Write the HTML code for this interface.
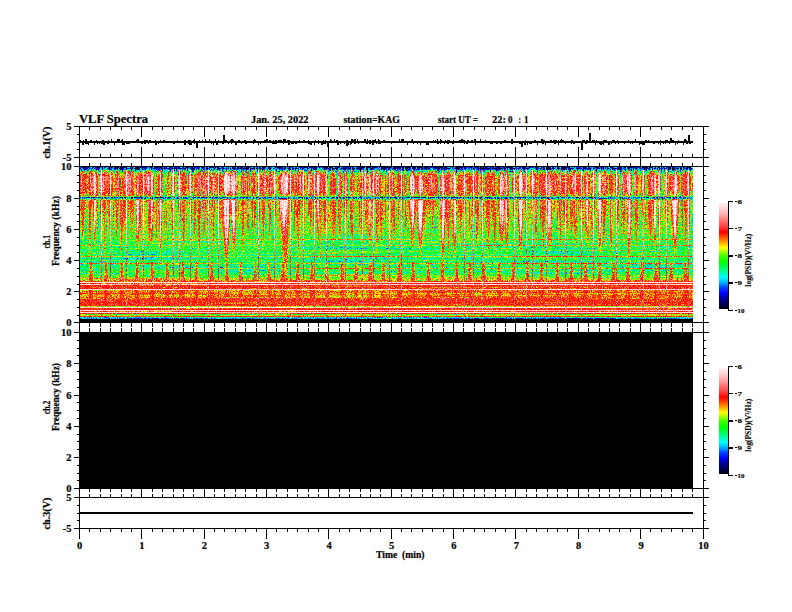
<!DOCTYPE html><html><head><meta charset="utf-8"><style>html,body{margin:0;padding:0;background:#fff;width:792px;height:612px;overflow:hidden;position:relative}</style></head><body><svg width="792" height="612" viewBox="0 0 792 612" style="position:absolute;left:0;top:0">
<defs>
<linearGradient id="bp" x1="0" y1="167" x2="0" y2="322" gradientUnits="userSpaceOnUse">
<stop offset="0.0000" stop-color="rgb(20,20,20)"/>
<stop offset="0.0129" stop-color="rgb(36,36,36)"/>
<stop offset="0.0258" stop-color="rgb(66,66,66)"/>
<stop offset="0.0452" stop-color="rgb(97,97,97)"/>
<stop offset="0.0645" stop-color="rgb(112,112,112)"/>
<stop offset="0.1613" stop-color="rgb(112,112,112)"/>
<stop offset="0.1871" stop-color="rgb(107,107,107)"/>
<stop offset="0.1935" stop-color="rgb(76,76,76)"/>
<stop offset="0.1968" stop-color="rgb(31,31,31)"/>
<stop offset="0.2032" stop-color="rgb(31,31,31)"/>
<stop offset="0.2097" stop-color="rgb(82,82,82)"/>
<stop offset="0.2194" stop-color="rgb(122,122,122)"/>
<stop offset="0.3097" stop-color="rgb(120,120,120)"/>
<stop offset="0.4065" stop-color="rgb(107,107,107)"/>
<stop offset="0.5032" stop-color="rgb(92,92,92)"/>
<stop offset="0.5742" stop-color="rgb(89,89,89)"/>
<stop offset="0.6774" stop-color="rgb(87,87,87)"/>
<stop offset="0.7032" stop-color="rgb(107,107,107)"/>
<stop offset="0.7290" stop-color="rgb(128,128,128)"/>
<stop offset="0.7355" stop-color="rgb(158,158,158)"/>
<stop offset="0.7935" stop-color="rgb(153,153,153)"/>
<stop offset="0.8000" stop-color="rgb(143,143,143)"/>
<stop offset="0.8452" stop-color="rgb(143,143,143)"/>
<stop offset="0.8516" stop-color="rgb(166,166,166)"/>
<stop offset="0.8903" stop-color="rgb(166,166,166)"/>
<stop offset="0.8968" stop-color="rgb(128,128,128)"/>
<stop offset="0.9484" stop-color="rgb(128,128,128)"/>
<stop offset="0.9677" stop-color="rgb(71,71,71)"/>
<stop offset="0.9806" stop-color="rgb(38,38,38)"/>
<stop offset="1.0000" stop-color="rgb(38,38,38)"/>
</linearGradient>
<linearGradient id="gW" x1="0" y1="0" x2="0" y2="1"><stop offset="0" stop-color="#fff" stop-opacity="0.6"/><stop offset="0.08" stop-color="#fff" stop-opacity="0.95"/><stop offset="0.6" stop-color="#fff" stop-opacity="0.9"/><stop offset="1" stop-color="#fff" stop-opacity="0.3"/></linearGradient>
<linearGradient id="gT" x1="0" y1="0" x2="0" y2="1"><stop offset="0" stop-color="#fff" stop-opacity="1"/><stop offset="0.45" stop-color="#fff" stop-opacity="0.9"/><stop offset="0.75" stop-color="#fff" stop-opacity="0.35"/><stop offset="1" stop-color="#fff" stop-opacity="0.25"/></linearGradient>
<linearGradient id="gR2" x1="0" y1="0" x2="0" y2="1"><stop offset="0" stop-color="#fff" stop-opacity="0.3"/><stop offset="0.7" stop-color="#fff" stop-opacity="0.25"/><stop offset="1" stop-color="#fff" stop-opacity="0.05"/></linearGradient>
<linearGradient id="gR" x1="0" y1="0" x2="0" y2="1"><stop offset="0" stop-color="#fff" stop-opacity="0.45"/><stop offset="0.7" stop-color="#fff" stop-opacity="0.35"/><stop offset="1" stop-color="#fff" stop-opacity="0.1"/></linearGradient>
<filter id="cmA" filterUnits="userSpaceOnUse" x="79" y="167" width="614" height="155" color-interpolation-filters="sRGB">
<feTurbulence type="fractalNoise" baseFrequency="0.8 0.7" numOctaves="1" seed="5" result="n"/>
<feColorMatrix in="n" type="matrix" values="1 0 0 0 0 1 0 0 0 0 1 0 0 0 0 0 0 0 0 1" result="g"/>
<feTurbulence type="fractalNoise" baseFrequency="0.6 0.02" numOctaves="1" seed="9" result="n2"/>
<feColorMatrix in="n2" type="matrix" values="1 0 0 0 0 1 0 0 0 0 1 0 0 0 0 0 0 0 0 1" result="g2"/>
<feComposite in="SourceGraphic" in2="g" operator="arithmetic" k1="0" k2="1" k3="0.65" k4="-0.325" result="v1"/>
<feComposite in="v1" in2="g2" operator="arithmetic" k1="0" k2="1" k3="0.6" k4="-0.3" result="v"/>
<feComponentTransfer in="v"><feFuncR type="table" tableValues="0.000 0.000 0.000 0.000 0.000 0.000 0.000 0.000 0.000 0.000 0.000 0.000 0.000 0.000 0.000 0.000 0.000 0.235 0.471 0.686 0.902 0.984 1.000 1.000 1.000 1.000 1.000 1.000 1.000 1.000 1.000 1.000 1.000 1.000 1.000 1.000 1.000 1.000 1.000 1.000 1.000"/><feFuncG type="table" tableValues="0.000 0.000 0.000 0.000 0.000 0.078 0.157 0.373 0.588 0.765 0.941 0.962 0.983 1.000 1.000 1.000 1.000 1.000 1.000 1.000 1.000 0.820 0.627 0.431 0.280 0.140 0.000 0.070 0.140 0.216 0.314 0.412 0.510 0.578 0.647 0.716 0.784 0.828 0.873 0.917 0.961"/><feFuncB type="table" tableValues="0.094 0.224 0.353 0.529 0.706 0.853 1.000 1.000 1.000 1.000 1.000 0.839 0.678 0.515 0.343 0.172 0.000 0.000 0.000 0.000 0.000 0.000 0.000 0.000 0.000 0.000 0.000 0.070 0.140 0.216 0.314 0.412 0.510 0.578 0.647 0.716 0.784 0.828 0.873 0.917 0.961"/></feComponentTransfer>
</filter>
<filter id="cmB" filterUnits="userSpaceOnUse" x="79" y="167" width="614" height="155" color-interpolation-filters="sRGB">
<feTurbulence type="fractalNoise" baseFrequency="0.8 0.7" numOctaves="1" seed="5" result="n"/>
<feColorMatrix in="n" type="matrix" values="1 0 0 0 0 1 0 0 0 0 1 0 0 0 0 0 0 0 0 1" result="g"/>
<feTurbulence type="fractalNoise" baseFrequency="0.01 0.6" numOctaves="1" seed="13" result="n2"/>
<feColorMatrix in="n2" type="matrix" values="1 0 0 0 0 1 0 0 0 0 1 0 0 0 0 0 0 0 0 1" result="g2"/>
<feComposite in="SourceGraphic" in2="g" operator="arithmetic" k1="0" k2="1" k3="0.6" k4="-0.3" result="v1"/>
<feComposite in="v1" in2="g2" operator="arithmetic" k1="0" k2="1" k3="0.4" k4="-0.2" result="v"/>
<feComponentTransfer in="v"><feFuncR type="table" tableValues="0.000 0.000 0.000 0.000 0.000 0.000 0.000 0.000 0.000 0.000 0.000 0.000 0.000 0.000 0.000 0.000 0.000 0.235 0.471 0.686 0.902 0.984 1.000 1.000 1.000 1.000 1.000 1.000 1.000 1.000 1.000 1.000 1.000 1.000 1.000 1.000 1.000 1.000 1.000 1.000 1.000"/><feFuncG type="table" tableValues="0.000 0.000 0.000 0.000 0.000 0.078 0.157 0.373 0.588 0.765 0.941 0.962 0.983 1.000 1.000 1.000 1.000 1.000 1.000 1.000 1.000 0.820 0.627 0.431 0.280 0.140 0.000 0.070 0.140 0.216 0.314 0.412 0.510 0.578 0.647 0.716 0.784 0.828 0.873 0.917 0.961"/><feFuncB type="table" tableValues="0.094 0.224 0.353 0.529 0.706 0.853 1.000 1.000 1.000 1.000 1.000 0.839 0.678 0.515 0.343 0.172 0.000 0.000 0.000 0.000 0.000 0.000 0.000 0.000 0.000 0.000 0.000 0.070 0.140 0.216 0.314 0.412 0.510 0.578 0.647 0.716 0.784 0.828 0.873 0.917 0.961"/></feComponentTransfer>
</filter>
<filter id="cmC" filterUnits="userSpaceOnUse" x="79" y="167" width="614" height="155" color-interpolation-filters="sRGB">
<feTurbulence type="fractalNoise" baseFrequency="0.8 0.7" numOctaves="1" seed="21" result="n"/>
<feColorMatrix in="n" type="matrix" values="1 0 0 0 0 1 0 0 0 0 1 0 0 0 0 0 0 0 0 1" result="g"/>
<feTurbulence type="fractalNoise" baseFrequency="0.01 0.6" numOctaves="1" seed="17" result="n2"/>
<feColorMatrix in="n2" type="matrix" values="1 0 0 0 0 1 0 0 0 0 1 0 0 0 0 0 0 0 0 1" result="g2"/>
<feComposite in="SourceGraphic" in2="g" operator="arithmetic" k1="0" k2="1" k3="0.5" k4="-0.25" result="v1"/>
<feComposite in="v1" in2="g2" operator="arithmetic" k1="0" k2="1" k3="0.3" k4="-0.15" result="v"/>
<feComponentTransfer in="v"><feFuncR type="table" tableValues="0.000 0.000 0.000 0.000 0.000 0.000 0.000 0.000 0.000 0.000 0.000 0.000 0.000 0.000 0.000 0.000 0.000 0.235 0.471 0.686 0.902 0.984 1.000 1.000 1.000 1.000 1.000 1.000 1.000 1.000 1.000 1.000 1.000 1.000 1.000 1.000 1.000 1.000 1.000 1.000 1.000"/><feFuncG type="table" tableValues="0.000 0.000 0.000 0.000 0.000 0.078 0.157 0.373 0.588 0.765 0.941 0.962 0.983 1.000 1.000 1.000 1.000 1.000 1.000 1.000 1.000 0.820 0.627 0.431 0.280 0.140 0.000 0.070 0.140 0.216 0.314 0.412 0.510 0.578 0.647 0.716 0.784 0.828 0.873 0.917 0.961"/><feFuncB type="table" tableValues="0.094 0.224 0.353 0.529 0.706 0.853 1.000 1.000 1.000 1.000 1.000 0.839 0.678 0.515 0.343 0.172 0.000 0.000 0.000 0.000 0.000 0.000 0.000 0.000 0.000 0.000 0.000 0.070 0.140 0.216 0.314 0.412 0.510 0.578 0.647 0.716 0.784 0.828 0.873 0.917 0.961"/></feComponentTransfer>
</filter>
<linearGradient id="mg" x1="0" y1="167" x2="0" y2="322" gradientUnits="userSpaceOnUse"><stop offset="0.35" stop-color="#000"/><stop offset="0.5" stop-color="#fff"/></linearGradient>
<mask id="mm" maskUnits="userSpaceOnUse" x="79" y="167" width="614" height="155"><rect x="79" y="167" width="614" height="155" fill="url(#mg)"/></mask>
<clipPath id="cC"><rect x="79" y="281" width="614" height="41"/></clipPath>
<g id="sp">
<rect x="79" y="167" width="614" height="155" fill="url(#bp)"/>
<rect x="79" y="281" width="614" height="1" fill="rgb(153,153,153)"/>
<rect x="79" y="282" width="614" height="1" fill="rgb(242,242,242)"/>
<rect x="79" y="283" width="614" height="1" fill="rgb(163,163,163)"/>
<rect x="79" y="284" width="614" height="1" fill="rgb(234,234,234)"/>
<rect x="79" y="285" width="614" height="1" fill="rgb(168,168,168)"/>
<rect x="79" y="286" width="614" height="1" fill="rgb(163,163,163)"/>
<rect x="79" y="287" width="614" height="1" fill="rgb(158,158,158)"/>
<rect x="79" y="288" width="614" height="1" fill="rgb(163,163,163)"/>
<rect x="79" y="289" width="614" height="1" fill="rgb(234,234,234)"/>
<rect x="79" y="299" width="614" height="1" fill="rgb(165,165,165)"/>
<rect x="79" y="300" width="614" height="1" fill="rgb(168,168,168)"/>
<rect x="79" y="301" width="614" height="1" fill="rgb(168,168,168)"/>
<rect x="79" y="302" width="614" height="1" fill="rgb(165,165,165)"/>
<rect x="79" y="303" width="614" height="1" fill="rgb(168,168,168)"/>
<rect x="79" y="304" width="614" height="1" fill="rgb(165,165,165)"/>
<rect x="79" y="305" width="614" height="1" fill="rgb(163,163,163)"/>
<rect x="79" y="306" width="614" height="1" fill="rgb(127,127,127)"/>
<rect x="79" y="307" width="614" height="1" fill="rgb(242,242,242)"/>
<rect x="79" y="308" width="614" height="1" fill="rgb(163,163,163)"/>
<rect x="79" y="309" width="614" height="1" fill="rgb(163,163,163)"/>
<rect x="79" y="310" width="614" height="1" fill="rgb(242,242,242)"/>
<rect x="79" y="311" width="614" height="1" fill="rgb(163,163,163)"/>
<rect x="79" y="312" width="614" height="1" fill="rgb(242,242,242)"/>
<rect x="79" y="313" width="614" height="1" fill="rgb(163,163,163)"/>
<rect x="79" y="314" width="614" height="1" fill="rgb(107,107,107)"/>
<rect x="79" y="315" width="614" height="1" fill="rgb(117,117,117)"/>
<rect x="79" y="316" width="614" height="1" fill="rgb(163,163,163)"/>
<rect x="79" y="317" width="614" height="1" fill="rgb(71,71,71)"/>
<rect x="79" y="318" width="614" height="1" fill="rgb(45,45,45)"/>
<polygon points="79.5,170.0 80.5,170.0 81.7,177.0 81.7,190.0 80.7,197.0 79.3,197.0 78.3,190.0 78.3,177.0" fill="#fff" opacity="0.36"/>
<polygon points="79.2,199 80.8,199 80.2,247 79.8,247" fill="url(#gR2)"/>
<polygon points="85.4,170.0 86.4,170.0 87.6,177.0 87.6,190.0 86.6,197.0 85.2,197.0 84.1,190.0 84.1,177.0" fill="#fff" opacity="0.37"/>
<polygon points="85.0,199 86.7,199 86.1,213 85.6,213" fill="url(#gR2)"/>
<polygon points="91.4,170.0 92.4,170.0 93.9,177.0 93.9,190.0 92.6,197.0 91.2,197.0 90.0,190.0 90.0,177.0" fill="#fff" opacity="0.41"/>
<polygon points="90.9,199 92.9,199 92.2,209 91.7,209" fill="url(#gR2)"/>
<polygon points="96.6,170.0 97.6,170.0 98.3,177.0 98.3,190.0 97.8,197.0 96.4,197.0 96.0,190.0 96.0,177.0" fill="#fff" opacity="0.41"/>
<polygon points="96.6,199 97.7,199 97.4,236 96.9,236" fill="url(#gR2)"/>
<polygon points="100.8,170.0 101.8,170.0 103.8,177.0 103.8,190.0 102.0,197.0 100.6,197.0 98.8,190.0 98.8,177.0" fill="#fff" opacity="0.44"/>
<polygon points="100.1,199 102.5,199 101.5,234 101.0,234" fill="url(#gR2)"/>
<polygon points="107.3,170.0 108.3,170.0 109.0,177.0 109.0,190.0 108.5,197.0 107.1,197.0 106.5,190.0 106.5,177.0" fill="#fff" opacity="0.25"/>
<polygon points="107.1,199 108.4,199 108.0,229 107.5,229" fill="url(#gR2)"/>
<polygon points="111.5,170.0 112.5,170.0 113.3,177.0 113.3,190.0 112.7,197.0 111.3,197.0 110.7,190.0 110.7,177.0" fill="#fff" opacity="0.30"/>
<polygon points="111.3,199 112.6,199 112.2,206 111.7,206" fill="url(#gR2)"/>
<polygon points="117.3,170.0 118.3,170.0 119.5,177.0 119.5,190.0 118.5,197.0 117.1,197.0 116.2,190.0 116.2,177.0" fill="#fff" opacity="0.42"/>
<polygon points="117.0,199 118.7,199 118.1,228 117.6,228" fill="url(#gR2)"/>
<polygon points="123.9,170.0 124.9,170.0 126.2,177.0 126.2,190.0 125.1,197.0 123.7,197.0 122.7,190.0 122.7,177.0" fill="#fff" opacity="0.38"/>
<polygon points="123.5,199 125.3,199 124.7,226 124.2,226" fill="url(#gR2)"/>
<polygon points="129.0,170.0 130.0,170.0 132.0,177.0 132.0,190.0 130.2,197.0 128.8,197.0 127.0,190.0 127.0,177.0" fill="#fff" opacity="0.45"/>
<polygon points="128.3,199 130.8,199 129.8,243 129.3,243" fill="url(#gR2)"/>
<polygon points="135.9,170.0 136.9,170.0 137.8,177.0 137.8,190.0 137.1,197.0 135.7,197.0 134.9,190.0 134.9,177.0" fill="#fff" opacity="0.30"/>
<polygon points="135.6,199 137.1,199 136.6,218 136.1,218" fill="url(#gR2)"/>
<polygon points="140.1,170.0 141.1,170.0 142.8,177.0 142.8,190.0 141.3,197.0 139.9,197.0 138.5,190.0 138.5,177.0" fill="#fff" opacity="0.33"/>
<polygon points="139.6,199 141.7,199 140.9,243 140.4,243" fill="url(#gR2)"/>
<polygon points="145.7,170.0 146.7,170.0 148.6,177.0 148.6,190.0 146.9,197.0 145.5,197.0 143.7,190.0 143.7,177.0" fill="#fff" opacity="0.42"/>
<polygon points="145.0,199 147.4,199 146.4,205 145.9,205" fill="url(#gR2)"/>
<polygon points="150.5,170.0 151.5,170.0 153.4,177.0 153.4,190.0 151.7,197.0 150.3,197.0 148.7,190.0 148.7,177.0" fill="#fff" opacity="0.34"/>
<polygon points="149.8,199 152.2,199 151.3,249 150.8,249" fill="url(#gR2)"/>
<polygon points="156.1,170.0 157.1,170.0 157.7,177.0 157.7,190.0 157.3,197.0 155.9,197.0 155.5,190.0 155.5,177.0" fill="#fff" opacity="0.38"/>
<polygon points="156.1,199 157.2,199 156.9,240 156.4,240" fill="url(#gR2)"/>
<polygon points="161.2,170.0 162.2,170.0 162.8,177.0 162.8,190.0 162.4,197.0 161.0,197.0 160.6,190.0 160.6,177.0" fill="#fff" opacity="0.32"/>
<polygon points="161.1,199 162.3,199 161.9,248 161.4,248" fill="url(#gR2)"/>
<polygon points="168.2,170.0 169.2,170.0 169.9,177.0 169.9,190.0 169.4,197.0 168.0,197.0 167.5,190.0 167.5,177.0" fill="#fff" opacity="0.30"/>
<polygon points="168.1,199 169.3,199 169.0,210 168.5,210" fill="url(#gR2)"/>
<polygon points="172.5,170.0 173.5,170.0 175.2,177.0 175.2,190.0 173.7,197.0 172.3,197.0 170.8,190.0 170.8,177.0" fill="#fff" opacity="0.29"/>
<polygon points="171.9,199 174.1,199 173.2,230 172.7,230" fill="url(#gR2)"/>
<polygon points="178.2,170.0 179.2,170.0 180.0,177.0 180.0,190.0 179.4,197.0 178.0,197.0 177.5,190.0 177.5,177.0" fill="#fff" opacity="0.40"/>
<polygon points="178.1,199 179.4,199 179.0,211 178.5,211" fill="url(#gR2)"/>
<polygon points="184.8,170.0 185.8,170.0 186.5,177.0 186.5,190.0 186.0,197.0 184.6,197.0 184.1,190.0 184.1,177.0" fill="#fff" opacity="0.33"/>
<polygon points="184.7,199 185.9,199 185.6,215 185.1,215" fill="url(#gR2)"/>
<polygon points="189.9,170.0 190.9,170.0 192.9,177.0 192.9,190.0 191.1,197.0 189.7,197.0 187.9,190.0 187.9,177.0" fill="#fff" opacity="0.41"/>
<polygon points="189.2,199 191.6,199 190.7,219 190.2,219" fill="url(#gR2)"/>
<polygon points="197.4,170.0 198.4,170.0 199.3,177.0 199.3,190.0 198.6,197.0 197.2,197.0 196.6,190.0 196.6,177.0" fill="#fff" opacity="0.33"/>
<polygon points="197.3,199 198.6,199 198.2,243 197.7,243" fill="url(#gR2)"/>
<polygon points="204.0,170.0 205.0,170.0 205.7,177.0 205.7,190.0 205.2,197.0 203.8,197.0 203.4,190.0 203.4,177.0" fill="#fff" opacity="0.45"/>
<polygon points="203.9,199 205.1,199 204.8,215 204.3,215" fill="url(#gR2)"/>
<polygon points="209.0,170.0 210.0,170.0 211.7,177.0 211.7,190.0 210.2,197.0 208.8,197.0 207.4,190.0 207.4,177.0" fill="#fff" opacity="0.32"/>
<polygon points="208.5,199 210.6,199 209.8,218 209.3,218" fill="url(#gR2)"/>
<polygon points="213.3,170.0 214.3,170.0 215.0,177.0 215.0,190.0 214.5,197.0 213.1,197.0 212.7,190.0 212.7,177.0" fill="#fff" opacity="0.37"/>
<polygon points="213.3,199 214.4,199 214.1,216 213.6,216" fill="url(#gR2)"/>
<polygon points="219.7,170.0 220.7,170.0 221.8,177.0 221.8,190.0 220.9,197.0 219.5,197.0 218.7,190.0 218.7,177.0" fill="#fff" opacity="0.34"/>
<polygon points="219.5,199 221.0,199 220.5,248 220.0,248" fill="url(#gR2)"/>
<polygon points="225.7,170.0 226.7,170.0 228.0,177.0 228.0,190.0 226.9,197.0 225.5,197.0 224.3,190.0 224.3,177.0" fill="#fff" opacity="0.42"/>
<polygon points="225.2,199 227.1,199 226.4,213 225.9,213" fill="url(#gR2)"/>
<polygon points="230.3,170.0 231.3,170.0 233.2,177.0 233.2,190.0 231.5,197.0 230.1,197.0 228.4,190.0 228.4,177.0" fill="#fff" opacity="0.41"/>
<polygon points="229.6,199 232.0,199 231.0,216 230.5,216" fill="url(#gR2)"/>
<polygon points="235.1,170.0 236.1,170.0 237.7,177.0 237.7,190.0 236.3,197.0 234.9,197.0 233.4,190.0 233.4,177.0" fill="#fff" opacity="0.44"/>
<polygon points="234.5,199 236.6,199 235.8,214 235.3,214" fill="url(#gR2)"/>
<polygon points="242.9,170.0 243.9,170.0 245.7,177.0 245.7,190.0 244.1,197.0 242.7,197.0 241.0,190.0 241.0,177.0" fill="#fff" opacity="0.37"/>
<polygon points="242.2,199 244.5,199 243.6,224 243.1,224" fill="url(#gR2)"/>
<polygon points="247.3,170.0 248.3,170.0 248.8,177.0 248.8,190.0 248.5,197.0 247.1,197.0 246.7,190.0 246.7,177.0" fill="#fff" opacity="0.44"/>
<polygon points="247.2,199 248.3,199 248.0,216 247.5,216" fill="url(#gR2)"/>
<polygon points="254.1,170.0 255.1,170.0 256.0,177.0 256.0,190.0 255.3,197.0 253.9,197.0 253.2,190.0 253.2,177.0" fill="#fff" opacity="0.41"/>
<polygon points="253.9,199 255.3,199 254.8,232 254.3,232" fill="url(#gR2)"/>
<polygon points="259.3,170.0 260.3,170.0 261.0,177.0 261.0,190.0 260.5,197.0 259.1,197.0 258.5,190.0 258.5,177.0" fill="#fff" opacity="0.39"/>
<polygon points="259.1,199 260.4,199 260.0,208 259.5,208" fill="url(#gR2)"/>
<polygon points="264.2,170.0 265.2,170.0 266.5,177.0 266.5,190.0 265.4,197.0 264.0,197.0 262.8,190.0 262.8,177.0" fill="#fff" opacity="0.42"/>
<polygon points="263.8,199 265.6,199 264.9,233 264.4,233" fill="url(#gR2)"/>
<polygon points="269.3,170.0 270.3,170.0 272.2,177.0 272.2,190.0 270.5,197.0 269.1,197.0 267.4,190.0 267.4,177.0" fill="#fff" opacity="0.29"/>
<polygon points="268.6,199 271.0,199 270.0,206 269.5,206" fill="url(#gR2)"/>
<polygon points="274.4,170.0 275.4,170.0 276.5,177.0 276.5,190.0 275.6,197.0 274.2,197.0 273.2,190.0 273.2,177.0" fill="#fff" opacity="0.26"/>
<polygon points="274.0,199 275.7,199 275.1,213 274.6,213" fill="url(#gR2)"/>
<polygon points="279.8,170.0 280.8,170.0 282.2,177.0 282.2,190.0 281.0,197.0 279.6,197.0 278.5,190.0 278.5,177.0" fill="#fff" opacity="0.28"/>
<polygon points="279.4,199 281.3,199 280.6,221 280.1,221" fill="url(#gR2)"/>
<polygon points="287.4,170.0 288.4,170.0 290.4,177.0 290.4,190.0 288.6,197.0 287.2,197.0 285.4,190.0 285.4,177.0" fill="#fff" opacity="0.38"/>
<polygon points="286.7,199 289.1,199 288.2,236 287.7,236" fill="url(#gR2)"/>
<polygon points="293.7,170.0 294.7,170.0 295.5,177.0 295.5,190.0 294.9,197.0 293.5,197.0 293.0,190.0 293.0,177.0" fill="#fff" opacity="0.26"/>
<polygon points="293.6,199 294.9,199 294.5,206 294.0,206" fill="url(#gR2)"/>
<polygon points="301.4,170.0 302.4,170.0 303.9,177.0 303.9,190.0 302.6,197.0 301.2,197.0 299.8,190.0 299.8,177.0" fill="#fff" opacity="0.44"/>
<polygon points="300.9,199 302.9,199 302.1,206 301.6,206" fill="url(#gR2)"/>
<polygon points="307.9,170.0 308.9,170.0 310.2,177.0 310.2,190.0 309.1,197.0 307.7,197.0 306.7,190.0 306.7,177.0" fill="#fff" opacity="0.40"/>
<polygon points="307.6,199 309.3,199 308.7,219 308.2,219" fill="url(#gR2)"/>
<polygon points="315.9,170.0 316.9,170.0 317.5,177.0 317.5,190.0 317.1,197.0 315.7,197.0 315.3,190.0 315.3,177.0" fill="#fff" opacity="0.36"/>
<polygon points="315.9,199 317.0,199 316.7,238 316.2,238" fill="url(#gR2)"/>
<polygon points="323.5,170.0 324.5,170.0 326.1,177.0 326.1,190.0 324.7,197.0 323.3,197.0 321.9,190.0 321.9,177.0" fill="#fff" opacity="0.39"/>
<polygon points="323.0,199 325.1,199 324.3,241 323.8,241" fill="url(#gR2)"/>
<polygon points="331.2,170.0 332.2,170.0 333.2,177.0 333.2,190.0 332.4,197.0 331.0,197.0 330.2,190.0 330.2,177.0" fill="#fff" opacity="0.39"/>
<polygon points="330.9,199 332.5,199 331.9,246 331.4,246" fill="url(#gR2)"/>
<polygon points="338.7,170.0 339.7,170.0 340.8,177.0 340.8,190.0 339.9,197.0 338.5,197.0 337.6,190.0 337.6,177.0" fill="#fff" opacity="0.41"/>
<polygon points="338.4,199 340.0,199 339.4,244 338.9,244" fill="url(#gR2)"/>
<polygon points="345.0,170.0 346.0,170.0 347.4,177.0 347.4,190.0 346.2,197.0 344.8,197.0 343.5,190.0 343.5,177.0" fill="#fff" opacity="0.33"/>
<polygon points="344.5,199 346.4,199 345.7,231 345.2,231" fill="url(#gR2)"/>
<polygon points="351.4,170.0 352.4,170.0 353.0,177.0 353.0,190.0 352.6,197.0 351.2,197.0 350.8,190.0 350.8,177.0" fill="#fff" opacity="0.38"/>
<polygon points="351.3,199 352.5,199 352.2,250 351.7,250" fill="url(#gR2)"/>
<polygon points="358.9,170.0 359.9,170.0 361.5,177.0 361.5,190.0 360.1,197.0 358.7,197.0 357.3,190.0 357.3,177.0" fill="#fff" opacity="0.33"/>
<polygon points="358.4,199 360.5,199 359.7,238 359.2,238" fill="url(#gR2)"/>
<polygon points="365.2,170.0 366.2,170.0 367.4,177.0 367.4,190.0 366.4,197.0 365.0,197.0 364.1,190.0 364.1,177.0" fill="#fff" opacity="0.42"/>
<polygon points="364.9,199 366.6,199 366.0,209 365.5,209" fill="url(#gR2)"/>
<polygon points="372.2,170.0 373.2,170.0 373.8,177.0 373.8,190.0 373.4,197.0 372.0,197.0 371.7,190.0 371.7,177.0" fill="#fff" opacity="0.37"/>
<polygon points="372.2,199 373.3,199 373.0,227 372.5,227" fill="url(#gR2)"/>
<polygon points="377.2,170.0 378.2,170.0 379.7,177.0 379.7,190.0 378.4,197.0 377.0,197.0 375.6,190.0 375.6,177.0" fill="#fff" opacity="0.35"/>
<polygon points="376.6,199 378.7,199 377.9,233 377.4,233" fill="url(#gR2)"/>
<polygon points="384.8,170.0 385.8,170.0 386.7,177.0 386.7,190.0 386.0,197.0 384.6,197.0 384.0,190.0 384.0,177.0" fill="#fff" opacity="0.25"/>
<polygon points="384.7,199 386.0,199 385.6,219 385.1,219" fill="url(#gR2)"/>
<polygon points="391.6,170.0 392.6,170.0 393.4,177.0 393.4,190.0 392.8,197.0 391.4,197.0 390.8,190.0 390.8,177.0" fill="#fff" opacity="0.28"/>
<polygon points="391.4,199 392.7,199 392.3,246 391.8,246" fill="url(#gR2)"/>
<polygon points="398.2,170.0 399.2,170.0 400.4,177.0 400.4,190.0 399.4,197.0 398.0,197.0 397.0,190.0 397.0,177.0" fill="#fff" opacity="0.43"/>
<polygon points="397.9,199 399.5,199 399.0,220 398.5,220" fill="url(#gR2)"/>
<polygon points="404.9,170.0 405.9,170.0 406.7,177.0 406.7,190.0 406.1,197.0 404.7,197.0 404.1,190.0 404.1,177.0" fill="#fff" opacity="0.34"/>
<polygon points="404.7,199 406.0,199 405.6,241 405.1,241" fill="url(#gR2)"/>
<polygon points="412.5,170.0 413.5,170.0 415.3,177.0 415.3,190.0 413.7,197.0 412.3,197.0 410.7,190.0 410.7,177.0" fill="#fff" opacity="0.33"/>
<polygon points="411.9,199 414.2,199 413.3,231 412.8,231" fill="url(#gR2)"/>
<polygon points="417.8,170.0 418.8,170.0 419.5,177.0 419.5,190.0 419.0,197.0 417.6,197.0 417.1,190.0 417.1,177.0" fill="#fff" opacity="0.35"/>
<polygon points="417.7,199 418.9,199 418.5,243 418.0,243" fill="url(#gR2)"/>
<polygon points="425.2,170.0 426.2,170.0 427.7,177.0 427.7,190.0 426.4,197.0 425.0,197.0 423.6,190.0 423.6,177.0" fill="#fff" opacity="0.44"/>
<polygon points="424.6,199 426.7,199 425.9,217 425.4,217" fill="url(#gR2)"/>
<polygon points="429.9,170.0 430.9,170.0 432.0,177.0 432.0,190.0 431.1,197.0 429.7,197.0 428.7,190.0 428.7,177.0" fill="#fff" opacity="0.31"/>
<polygon points="429.5,199 431.2,199 430.6,215 430.1,215" fill="url(#gR2)"/>
<polygon points="435.5,170.0 436.5,170.0 438.0,177.0 438.0,190.0 436.7,197.0 435.3,197.0 434.1,190.0 434.1,177.0" fill="#fff" opacity="0.35"/>
<polygon points="435.0,199 437.0,199 436.3,219 435.8,219" fill="url(#gR2)"/>
<polygon points="442.9,170.0 443.9,170.0 445.8,177.0 445.8,190.0 444.1,197.0 442.7,197.0 440.9,190.0 440.9,177.0" fill="#fff" opacity="0.34"/>
<polygon points="442.1,199 444.6,199 443.6,208 443.1,208" fill="url(#gR2)"/>
<polygon points="447.0,170.0 448.0,170.0 449.8,177.0 449.8,190.0 448.2,197.0 446.8,197.0 445.2,190.0 445.2,177.0" fill="#fff" opacity="0.26"/>
<polygon points="446.3,199 448.7,199 447.7,237 447.2,237" fill="url(#gR2)"/>
<polygon points="453.3,170.0 454.3,170.0 455.2,177.0 455.2,190.0 454.5,197.0 453.1,197.0 452.3,190.0 452.3,177.0" fill="#fff" opacity="0.41"/>
<polygon points="453.0,199 454.5,199 454.0,206 453.5,206" fill="url(#gR2)"/>
<polygon points="457.8,170.0 458.8,170.0 460.0,177.0 460.0,190.0 459.0,197.0 457.6,197.0 456.6,190.0 456.6,177.0" fill="#fff" opacity="0.25"/>
<polygon points="457.5,199 459.2,199 458.6,242 458.1,242" fill="url(#gR2)"/>
<polygon points="462.8,170.0 463.8,170.0 464.5,177.0 464.5,190.0 464.0,197.0 462.6,197.0 462.1,190.0 462.1,177.0" fill="#fff" opacity="0.26"/>
<polygon points="462.7,199 463.9,199 463.5,233 463.0,233" fill="url(#gR2)"/>
<polygon points="468.6,170.0 469.6,170.0 471.0,177.0 471.0,190.0 469.8,197.0 468.4,197.0 467.1,190.0 467.1,177.0" fill="#fff" opacity="0.38"/>
<polygon points="468.1,199 470.0,199 469.3,241 468.8,241" fill="url(#gR2)"/>
<polygon points="476.4,170.0 477.4,170.0 478.9,177.0 478.9,190.0 477.6,197.0 476.2,197.0 474.9,190.0 474.9,177.0" fill="#fff" opacity="0.29"/>
<polygon points="475.9,199 477.9,199 477.1,226 476.6,226" fill="url(#gR2)"/>
<polygon points="481.1,170.0 482.1,170.0 482.6,177.0 482.6,190.0 482.3,197.0 480.9,197.0 480.6,190.0 480.6,177.0" fill="#fff" opacity="0.34"/>
<polygon points="481.1,199 482.1,199 481.9,237 481.4,237" fill="url(#gR2)"/>
<polygon points="485.8,170.0 486.8,170.0 487.7,177.0 487.7,190.0 487.0,197.0 485.6,197.0 484.9,190.0 484.9,177.0" fill="#fff" opacity="0.32"/>
<polygon points="485.6,199 487.0,199 486.6,236 486.1,236" fill="url(#gR2)"/>
<polygon points="491.9,170.0 492.9,170.0 494.3,177.0 494.3,190.0 493.1,197.0 491.7,197.0 490.5,190.0 490.5,177.0" fill="#fff" opacity="0.40"/>
<polygon points="491.4,199 493.4,199 492.7,223 492.2,223" fill="url(#gR2)"/>
<polygon points="499.1,170.0 500.1,170.0 501.9,177.0 501.9,190.0 500.3,197.0 498.9,197.0 497.2,190.0 497.2,177.0" fill="#fff" opacity="0.27"/>
<polygon points="498.4,199 500.8,199 499.8,247 499.3,247" fill="url(#gR2)"/>
<polygon points="506.0,170.0 507.0,170.0 507.7,177.0 507.7,190.0 507.2,197.0 505.8,197.0 505.3,190.0 505.3,177.0" fill="#fff" opacity="0.34"/>
<polygon points="505.9,199 507.1,199 506.7,233 506.2,233" fill="url(#gR2)"/>
<polygon points="513.6,170.0 514.6,170.0 515.7,177.0 515.7,190.0 514.8,197.0 513.4,197.0 512.5,190.0 512.5,177.0" fill="#fff" opacity="0.36"/>
<polygon points="513.3,199 514.9,199 514.4,245 513.9,245" fill="url(#gR2)"/>
<polygon points="520.8,170.0 521.8,170.0 523.7,177.0 523.7,190.0 522.0,197.0 520.6,197.0 518.9,190.0 518.9,177.0" fill="#fff" opacity="0.34"/>
<polygon points="520.1,199 522.5,199 521.5,234 521.0,234" fill="url(#gR2)"/>
<polygon points="525.6,170.0 526.6,170.0 528.2,177.0 528.2,190.0 526.8,197.0 525.4,197.0 524.0,190.0 524.0,177.0" fill="#fff" opacity="0.41"/>
<polygon points="525.1,199 527.2,199 526.4,234 525.9,234" fill="url(#gR2)"/>
<polygon points="532.5,170.0 533.5,170.0 534.3,177.0 534.3,190.0 533.7,197.0 532.3,197.0 531.7,190.0 531.7,177.0" fill="#fff" opacity="0.43"/>
<polygon points="532.3,199 533.6,199 533.2,249 532.7,249" fill="url(#gR2)"/>
<polygon points="540.4,170.0 541.4,170.0 542.7,177.0 542.7,190.0 541.6,197.0 540.2,197.0 539.1,190.0 539.1,177.0" fill="#fff" opacity="0.41"/>
<polygon points="540.0,199 541.8,199 541.1,219 540.6,219" fill="url(#gR2)"/>
<polygon points="548.0,170.0 549.0,170.0 550.8,177.0 550.8,190.0 549.2,197.0 547.8,197.0 546.2,190.0 546.2,177.0" fill="#fff" opacity="0.32"/>
<polygon points="547.4,199 549.7,199 548.8,209 548.3,209" fill="url(#gR2)"/>
<polygon points="553.8,170.0 554.8,170.0 556.1,177.0 556.1,190.0 555.0,197.0 553.6,197.0 552.5,190.0 552.5,177.0" fill="#fff" opacity="0.40"/>
<polygon points="553.4,199 555.2,199 554.5,227 554.0,227" fill="url(#gR2)"/>
<polygon points="557.9,170.0 558.9,170.0 560.6,177.0 560.6,190.0 559.1,197.0 557.7,197.0 556.2,190.0 556.2,177.0" fill="#fff" opacity="0.26"/>
<polygon points="557.3,199 559.5,199 558.7,241 558.2,241" fill="url(#gR2)"/>
<polygon points="562.6,170.0 563.6,170.0 564.6,177.0 564.6,190.0 563.8,197.0 562.4,197.0 561.6,190.0 561.6,177.0" fill="#fff" opacity="0.41"/>
<polygon points="562.3,199 563.8,199 563.3,211 562.8,211" fill="url(#gR2)"/>
<polygon points="567.2,170.0 568.2,170.0 569.5,177.0 569.5,190.0 568.4,197.0 567.0,197.0 565.9,190.0 565.9,177.0" fill="#fff" opacity="0.39"/>
<polygon points="566.8,199 568.6,199 567.9,243 567.4,243" fill="url(#gR2)"/>
<polygon points="574.0,170.0 575.0,170.0 576.9,177.0 576.9,190.0 575.2,197.0 573.8,197.0 572.0,190.0 572.0,177.0" fill="#fff" opacity="0.35"/>
<polygon points="573.2,199 575.7,199 574.7,248 574.2,248" fill="url(#gR2)"/>
<polygon points="578.3,170.0 579.3,170.0 580.1,177.0 580.1,190.0 579.5,197.0 578.1,197.0 577.5,190.0 577.5,177.0" fill="#fff" opacity="0.36"/>
<polygon points="578.1,199 579.5,199 579.0,218 578.5,218" fill="url(#gR2)"/>
<polygon points="585.2,170.0 586.2,170.0 587.7,177.0 587.7,190.0 586.4,197.0 585.0,197.0 583.8,190.0 583.8,177.0" fill="#fff" opacity="0.35"/>
<polygon points="584.7,199 586.7,199 586.0,243 585.5,243" fill="url(#gR2)"/>
<polygon points="591.5,170.0 592.5,170.0 593.4,177.0 593.4,190.0 592.7,197.0 591.3,197.0 590.5,190.0 590.5,177.0" fill="#fff" opacity="0.33"/>
<polygon points="591.2,199 592.7,199 592.2,243 591.7,243" fill="url(#gR2)"/>
<polygon points="599.1,170.0 600.1,170.0 600.9,177.0 600.9,190.0 600.3,197.0 598.9,197.0 598.2,190.0 598.2,177.0" fill="#fff" opacity="0.42"/>
<polygon points="598.9,199 600.2,199 599.8,249 599.3,249" fill="url(#gR2)"/>
<polygon points="605.1,170.0 606.1,170.0 607.5,177.0 607.5,190.0 606.3,197.0 604.9,197.0 603.8,190.0 603.8,177.0" fill="#fff" opacity="0.29"/>
<polygon points="604.7,199 606.6,199 605.9,229 605.4,229" fill="url(#gR2)"/>
<polygon points="611.2,170.0 612.2,170.0 613.6,177.0 613.6,190.0 612.4,197.0 611.0,197.0 609.8,190.0 609.8,177.0" fill="#fff" opacity="0.26"/>
<polygon points="610.7,199 612.6,199 611.9,249 611.4,249" fill="url(#gR2)"/>
<polygon points="617.2,170.0 618.2,170.0 619.3,177.0 619.3,190.0 618.4,197.0 617.0,197.0 616.1,190.0 616.1,177.0" fill="#fff" opacity="0.41"/>
<polygon points="616.9,199 618.5,199 618.0,230 617.5,230" fill="url(#gR2)"/>
<polygon points="623.2,170.0 624.2,170.0 625.7,177.0 625.7,190.0 624.4,197.0 623.0,197.0 621.7,190.0 621.7,177.0" fill="#fff" opacity="0.26"/>
<polygon points="622.7,199 624.7,199 623.9,229 623.4,229" fill="url(#gR2)"/>
<polygon points="628.8,170.0 629.8,170.0 631.8,177.0 631.8,190.0 630.0,197.0 628.6,197.0 626.9,190.0 626.9,177.0" fill="#fff" opacity="0.43"/>
<polygon points="628.1,199 630.6,199 629.6,217 629.1,217" fill="url(#gR2)"/>
<polygon points="634.7,170.0 635.7,170.0 636.4,177.0 636.4,190.0 635.9,197.0 634.5,197.0 634.0,190.0 634.0,177.0" fill="#fff" opacity="0.34"/>
<polygon points="634.6,199 635.8,199 635.5,242 635.0,242" fill="url(#gR2)"/>
<polygon points="642.3,170.0 643.3,170.0 644.6,177.0 644.6,190.0 643.5,197.0 642.1,197.0 641.1,190.0 641.1,177.0" fill="#fff" opacity="0.31"/>
<polygon points="642.0,199 643.7,199 643.1,214 642.6,214" fill="url(#gR2)"/>
<polygon points="648.8,170.0 649.8,170.0 651.7,177.0 651.7,190.0 650.0,197.0 648.6,197.0 646.9,190.0 646.9,177.0" fill="#fff" opacity="0.28"/>
<polygon points="648.1,199 650.5,199 649.6,240 649.1,240" fill="url(#gR2)"/>
<polygon points="652.9,170.0 653.9,170.0 654.7,177.0 654.7,190.0 654.1,197.0 652.7,197.0 652.1,190.0 652.1,177.0" fill="#fff" opacity="0.30"/>
<polygon points="652.8,199 654.0,199 653.7,236 653.2,236" fill="url(#gR2)"/>
<polygon points="658.2,170.0 659.2,170.0 660.2,177.0 660.2,190.0 659.4,197.0 658.0,197.0 657.2,190.0 657.2,177.0" fill="#fff" opacity="0.37"/>
<polygon points="657.9,199 659.5,199 658.9,210 658.4,210" fill="url(#gR2)"/>
<polygon points="665.1,170.0 666.1,170.0 666.8,177.0 666.8,190.0 666.3,197.0 664.9,197.0 664.4,190.0 664.4,177.0" fill="#fff" opacity="0.35"/>
<polygon points="665.0,199 666.2,199 665.9,216 665.4,216" fill="url(#gR2)"/>
<polygon points="669.9,170.0 670.9,170.0 672.2,177.0 672.2,190.0 671.1,197.0 669.7,197.0 668.6,190.0 668.6,177.0" fill="#fff" opacity="0.34"/>
<polygon points="669.5,199 671.3,199 670.7,222 670.2,222" fill="url(#gR2)"/>
<polygon points="675.6,170.0 676.6,170.0 677.9,177.0 677.9,190.0 676.8,197.0 675.4,197.0 674.3,190.0 674.3,177.0" fill="#fff" opacity="0.28"/>
<polygon points="675.2,199 677.0,199 676.3,214 675.8,214" fill="url(#gR2)"/>
<polygon points="682.1,170.0 683.1,170.0 684.5,177.0 684.5,190.0 683.3,197.0 681.9,197.0 680.6,190.0 680.6,177.0" fill="#fff" opacity="0.36"/>
<polygon points="681.6,199 683.6,199 682.8,243 682.3,243" fill="url(#gR2)"/>
<polygon points="688.5,170.0 689.5,170.0 691.3,177.0 691.3,190.0 689.7,197.0 688.3,197.0 686.7,190.0 686.7,177.0" fill="#fff" opacity="0.30"/>
<polygon points="687.9,199 690.2,199 689.3,238 688.8,238" fill="url(#gR2)"/>
<polygon points="82.4,170.0 83.4,170.0 85.3,177.0 85.3,190.0 83.6,197.0 82.2,197.0 80.5,190.0 80.5,177.0" fill="#fff" opacity="0.38"/>
<polygon points="81.2,199 84.6,199 83.3,245 82.5,245" fill="url(#gR)"/>
<polygon points="89.5,170.0 90.5,170.0 91.8,177.0 91.8,190.0 90.7,197.0 89.3,197.0 88.2,190.0 88.2,177.0" fill="#fff" opacity="0.38"/>
<polygon points="88.7,199 91.3,199 90.4,265 89.6,265" fill="url(#gR)"/>
<polygon points="104.4,170.0 105.4,170.0 106.6,177.0 106.6,190.0 105.6,197.0 104.2,197.0 103.2,190.0 103.2,177.0" fill="#fff" opacity="0.38"/>
<polygon points="103.7,199 106.1,199 105.3,268 104.5,268" fill="url(#gR)"/>
<polygon points="116.1,170.0 117.1,170.0 119.0,177.0 119.0,190.0 117.3,197.0 115.9,197.0 114.2,190.0 114.2,177.0" fill="#fff" opacity="0.38"/>
<polygon points="114.9,199 118.3,199 117.0,239 116.2,239" fill="url(#gR)"/>
<polygon points="120.8,170.0 121.8,170.0 123.0,177.0 123.0,190.0 122.0,197.0 120.6,197.0 119.6,190.0 119.6,177.0" fill="#fff" opacity="0.38"/>
<polygon points="120.1,199 122.5,199 121.7,259 120.9,259" fill="url(#gR)"/>
<polygon points="131.8,170.0 132.8,170.0 134.1,177.0 134.1,190.0 133.0,197.0 131.6,197.0 130.5,190.0 130.5,177.0" fill="#fff" opacity="0.38"/>
<polygon points="131.1,199 133.5,199 132.7,238 131.9,238" fill="url(#gR)"/>
<polygon points="149.0,170.0 150.0,170.0 151.8,177.0 151.8,190.0 150.2,197.0 148.8,197.0 147.2,190.0 147.2,177.0" fill="#fff" opacity="0.38"/>
<polygon points="147.9,199 151.1,199 149.9,249 149.1,249" fill="url(#gR)"/>
<polygon points="160.0,170.0 161.0,170.0 162.8,177.0 162.8,190.0 161.2,197.0 159.8,197.0 158.2,190.0 158.2,177.0" fill="#fff" opacity="0.38"/>
<polygon points="158.9,199 162.1,199 160.9,239 160.1,239" fill="url(#gR)"/>
<polygon points="183.2,170.0 184.2,170.0 185.6,177.0 185.6,190.0 184.4,197.0 183.0,197.0 181.8,190.0 181.8,177.0" fill="#fff" opacity="0.38"/>
<polygon points="182.4,199 185.0,199 184.1,258 183.3,258" fill="url(#gR)"/>
<polygon points="194.2,170.0 195.2,170.0 196.2,177.0 196.2,190.0 195.4,197.0 194.0,197.0 193.2,190.0 193.2,177.0" fill="#fff" opacity="0.38"/>
<polygon points="193.6,199 195.8,199 195.1,242 194.3,242" fill="url(#gR)"/>
<polygon points="198.9,170.0 199.9,170.0 201.6,177.0 201.6,190.0 200.1,197.0 198.7,197.0 197.2,190.0 197.2,177.0" fill="#fff" opacity="0.38"/>
<polygon points="197.9,199 200.9,199 199.8,265 199.0,265" fill="url(#gR)"/>
<polygon points="203.5,170.0 204.5,170.0 206.5,177.0 206.5,190.0 204.7,197.0 203.3,197.0 201.5,190.0 201.5,177.0" fill="#fff" opacity="0.38"/>
<polygon points="202.3,199 205.7,199 204.4,239 203.6,239" fill="url(#gR)"/>
<polygon points="213.0,170.0 214.0,170.0 215.5,177.0 215.5,190.0 214.2,197.0 212.8,197.0 211.5,190.0 211.5,177.0" fill="#fff" opacity="0.38"/>
<polygon points="212.1,199 214.9,199 213.9,260 213.1,260" fill="url(#gR)"/>
<polygon points="242.5,170.0 243.5,170.0 245.0,177.0 245.0,190.0 243.7,197.0 242.3,197.0 241.0,190.0 241.0,177.0" fill="#fff" opacity="0.38"/>
<polygon points="241.6,199 244.4,199 243.4,258 242.6,258" fill="url(#gR)"/>
<polygon points="247.5,170.0 248.5,170.0 249.7,177.0 249.7,190.0 248.7,197.0 247.3,197.0 246.3,190.0 246.3,177.0" fill="#fff" opacity="0.38"/>
<polygon points="246.8,199 249.2,199 248.4,237 247.6,237" fill="url(#gR)"/>
<polygon points="252.2,170.0 253.2,170.0 254.3,177.0 254.3,190.0 253.4,197.0 252.0,197.0 251.1,190.0 251.1,177.0" fill="#fff" opacity="0.38"/>
<polygon points="251.6,199 253.8,199 253.1,236 252.3,236" fill="url(#gR)"/>
<polygon points="263.1,170.0 264.1,170.0 265.7,177.0 265.7,190.0 264.3,197.0 262.9,197.0 261.5,190.0 261.5,177.0" fill="#fff" opacity="0.38"/>
<polygon points="262.2,199 265.0,199 264.0,252 263.2,252" fill="url(#gR)"/>
<polygon points="269.4,170.0 270.4,170.0 272.0,177.0 272.0,190.0 270.6,197.0 269.2,197.0 267.8,190.0 267.8,177.0" fill="#fff" opacity="0.38"/>
<polygon points="268.5,199 271.3,199 270.3,240 269.5,240" fill="url(#gR)"/>
<polygon points="294.2,170.0 295.2,170.0 296.4,177.0 296.4,190.0 295.4,197.0 294.0,197.0 293.0,190.0 293.0,177.0" fill="#fff" opacity="0.38"/>
<polygon points="293.5,199 295.9,199 295.1,242 294.3,242" fill="url(#gR)"/>
<polygon points="298.1,170.0 299.1,170.0 300.9,177.0 300.9,190.0 299.3,197.0 297.9,197.0 296.3,190.0 296.3,177.0" fill="#fff" opacity="0.38"/>
<polygon points="297.0,199 300.2,199 299.0,268 298.2,268" fill="url(#gR)"/>
<polygon points="309.9,170.0 310.9,170.0 312.8,177.0 312.8,190.0 311.1,197.0 309.7,197.0 308.0,190.0 308.0,177.0" fill="#fff" opacity="0.38"/>
<polygon points="308.7,199 312.1,199 310.8,238 310.0,238" fill="url(#gR)"/>
<polygon points="320.0,170.0 321.0,170.0 322.1,177.0 322.1,190.0 321.2,197.0 319.8,197.0 318.9,190.0 318.9,177.0" fill="#fff" opacity="0.38"/>
<polygon points="319.4,199 321.6,199 320.9,266 320.1,266" fill="url(#gR)"/>
<polygon points="333.0,170.0 334.0,170.0 335.5,177.0 335.5,190.0 334.2,197.0 332.8,197.0 331.5,190.0 331.5,177.0" fill="#fff" opacity="0.38"/>
<polygon points="332.1,199 334.9,199 333.9,260 333.1,260" fill="url(#gR)"/>
<polygon points="339.5,170.0 340.5,170.0 341.8,177.0 341.8,190.0 340.7,197.0 339.3,197.0 338.2,190.0 338.2,177.0" fill="#fff" opacity="0.38"/>
<polygon points="338.7,199 341.3,199 340.4,250 339.6,250" fill="url(#gR)"/>
<polygon points="352.0,170.0 353.0,170.0 354.5,177.0 354.5,190.0 353.2,197.0 351.8,197.0 350.5,190.0 350.5,177.0" fill="#fff" opacity="0.38"/>
<polygon points="351.1,199 353.9,199 352.9,249 352.1,249" fill="url(#gR)"/>
<polygon points="365.5,170.0 366.5,170.0 368.1,177.0 368.1,190.0 366.7,197.0 365.3,197.0 363.9,190.0 363.9,177.0" fill="#fff" opacity="0.38"/>
<polygon points="364.5,199 367.5,199 366.4,235 365.6,235" fill="url(#gR)"/>
<polygon points="376.5,170.0 377.5,170.0 379.2,177.0 379.2,190.0 377.7,197.0 376.3,197.0 374.8,190.0 374.8,177.0" fill="#fff" opacity="0.38"/>
<polygon points="375.5,199 378.5,199 377.4,263 376.6,263" fill="url(#gR)"/>
<polygon points="380.9,170.0 381.9,170.0 383.1,177.0 383.1,190.0 382.1,197.0 380.7,197.0 379.7,190.0 379.7,177.0" fill="#fff" opacity="0.38"/>
<polygon points="380.2,199 382.6,199 381.8,250 381.0,250" fill="url(#gR)"/>
<polygon points="393.4,170.0 394.4,170.0 396.1,177.0 396.1,190.0 394.6,197.0 393.2,197.0 391.7,190.0 391.7,177.0" fill="#fff" opacity="0.38"/>
<polygon points="392.3,199 395.5,199 394.3,248 393.5,248" fill="url(#gR)"/>
<polygon points="428.5,170.0 429.5,170.0 430.7,177.0 430.7,190.0 429.7,197.0 428.3,197.0 427.3,190.0 427.3,177.0" fill="#fff" opacity="0.38"/>
<polygon points="427.8,199 430.2,199 429.4,240 428.6,240" fill="url(#gR)"/>
<polygon points="432.5,170.0 433.5,170.0 435.0,177.0 435.0,190.0 433.7,197.0 432.3,197.0 431.0,190.0 431.0,177.0" fill="#fff" opacity="0.38"/>
<polygon points="431.6,199 434.4,199 433.4,236 432.6,236" fill="url(#gR)"/>
<polygon points="448.2,170.0 449.2,170.0 451.1,177.0 451.1,190.0 449.4,197.0 448.0,197.0 446.3,190.0 446.3,177.0" fill="#fff" opacity="0.38"/>
<polygon points="447.0,199 450.4,199 449.1,261 448.3,261" fill="url(#gR)"/>
<polygon points="453.5,170.0 454.5,170.0 456.2,177.0 456.2,190.0 454.7,197.0 453.3,197.0 451.8,190.0 451.8,177.0" fill="#fff" opacity="0.38"/>
<polygon points="452.5,199 455.5,199 454.4,263 453.6,263" fill="url(#gR)"/>
<polygon points="460.0,170.0 461.0,170.0 462.6,177.0 462.6,190.0 461.2,197.0 459.8,197.0 458.4,190.0 458.4,177.0" fill="#fff" opacity="0.38"/>
<polygon points="459.0,199 462.0,199 460.9,248 460.1,248" fill="url(#gR)"/>
<polygon points="476.5,170.0 477.5,170.0 479.1,177.0 479.1,190.0 477.7,197.0 476.3,197.0 474.9,190.0 474.9,177.0" fill="#fff" opacity="0.38"/>
<polygon points="475.5,199 478.5,199 477.4,252 476.6,252" fill="url(#gR)"/>
<polygon points="487.9,170.0 488.9,170.0 490.9,177.0 490.9,190.0 489.1,197.0 487.7,197.0 485.9,190.0 485.9,177.0" fill="#fff" opacity="0.38"/>
<polygon points="486.7,199 490.1,199 488.8,262 488.0,262" fill="url(#gR)"/>
<polygon points="494.2,170.0 495.2,170.0 496.5,177.0 496.5,190.0 495.4,197.0 494.0,197.0 492.9,190.0 492.9,177.0" fill="#fff" opacity="0.38"/>
<polygon points="493.5,199 495.9,199 495.1,265 494.3,265" fill="url(#gR)"/>
<polygon points="506.7,170.0 507.7,170.0 509.4,177.0 509.4,190.0 507.9,197.0 506.5,197.0 505.0,190.0 505.0,177.0" fill="#fff" opacity="0.38"/>
<polygon points="505.6,199 508.8,199 507.6,261 506.8,261" fill="url(#gR)"/>
<polygon points="535.7,170.0 536.7,170.0 538.5,177.0 538.5,190.0 536.9,197.0 535.5,197.0 533.9,190.0 533.9,177.0" fill="#fff" opacity="0.38"/>
<polygon points="534.6,199 537.8,199 536.6,248 535.8,248" fill="url(#gR)"/>
<polygon points="542.8,170.0 543.8,170.0 545.7,177.0 545.7,190.0 544.0,197.0 542.6,197.0 540.9,190.0 540.9,177.0" fill="#fff" opacity="0.38"/>
<polygon points="541.6,199 545.0,199 543.7,264 542.9,264" fill="url(#gR)"/>
<polygon points="550.5,170.0 551.5,170.0 553.2,177.0 553.2,190.0 551.7,197.0 550.3,197.0 548.8,190.0 548.8,177.0" fill="#fff" opacity="0.38"/>
<polygon points="549.5,199 552.5,199 551.4,260 550.6,260" fill="url(#gR)"/>
<polygon points="560.0,170.0 561.0,170.0 562.8,177.0 562.8,190.0 561.2,197.0 559.8,197.0 558.2,190.0 558.2,177.0" fill="#fff" opacity="0.38"/>
<polygon points="558.9,199 562.1,199 560.9,248 560.1,248" fill="url(#gR)"/>
<polygon points="571.0,170.0 572.0,170.0 573.7,177.0 573.7,190.0 572.2,197.0 570.8,197.0 569.3,190.0 569.3,177.0" fill="#fff" opacity="0.38"/>
<polygon points="569.9,199 573.1,199 571.9,237 571.1,237" fill="url(#gR)"/>
<polygon points="575.5,170.0 576.5,170.0 577.8,177.0 577.8,190.0 576.7,197.0 575.3,197.0 574.2,190.0 574.2,177.0" fill="#fff" opacity="0.38"/>
<polygon points="574.7,199 577.3,199 576.4,250 575.6,250" fill="url(#gR)"/>
<polygon points="587.9,170.0 588.9,170.0 589.9,177.0 589.9,190.0 589.1,197.0 587.7,197.0 586.9,190.0 586.9,177.0" fill="#fff" opacity="0.38"/>
<polygon points="587.3,199 589.5,199 588.8,247 588.0,247" fill="url(#gR)"/>
<polygon points="603.5,170.0 604.5,170.0 606.1,177.0 606.1,190.0 604.7,197.0 603.3,197.0 601.9,190.0 601.9,177.0" fill="#fff" opacity="0.38"/>
<polygon points="602.5,199 605.5,199 604.4,256 603.6,256" fill="url(#gR)"/>
<polygon points="610.5,170.0 611.5,170.0 612.7,177.0 612.7,190.0 611.7,197.0 610.3,197.0 609.3,190.0 609.3,177.0" fill="#fff" opacity="0.38"/>
<polygon points="609.8,199 612.2,199 611.4,266 610.6,266" fill="url(#gR)"/>
<polygon points="623.2,170.0 624.2,170.0 625.9,177.0 625.9,190.0 624.4,197.0 623.0,197.0 621.5,190.0 621.5,177.0" fill="#fff" opacity="0.38"/>
<polygon points="622.2,199 625.2,199 624.1,246 623.3,246" fill="url(#gR)"/>
<polygon points="635.7,170.0 636.7,170.0 638.4,177.0 638.4,190.0 636.9,197.0 635.5,197.0 634.0,190.0 634.0,177.0" fill="#fff" opacity="0.38"/>
<polygon points="634.7,199 637.7,199 636.6,254 635.8,254" fill="url(#gR)"/>
<polygon points="650.5,170.0 651.5,170.0 653.0,177.0 653.0,190.0 651.7,197.0 650.3,197.0 649.0,190.0 649.0,177.0" fill="#fff" opacity="0.38"/>
<polygon points="649.6,199 652.4,199 651.4,248 650.6,248" fill="url(#gR)"/>
<polygon points="685.1,170.0 686.1,170.0 688.1,177.0 688.1,190.0 686.3,197.0 684.9,197.0 683.1,190.0 683.1,177.0" fill="#fff" opacity="0.38"/>
<polygon points="683.9,199 687.3,199 686.0,256 685.2,256" fill="url(#gR)"/>
<polygon points="94.2,170.0 95.2,170.0 96.3,177.0 96.3,190.0 95.4,197.0 94.0,197.0 93.1,190.0 93.1,177.0" fill="#fff" opacity="0.35"/>
<polygon points="94.2,172.0 95.2,172.0 95.6,179.0 95.6,189.0 95.4,196.0 94.0,196.0 93.8,189.0 93.8,179.0" fill="#fff" opacity="0.80"/>
<polygon points="93.1,199 96.3,199 95.5,250 94.0,250" fill="url(#gR)"/>
<polygon points="93.8,199 95.6,199 95.2,235 94.2,235" fill="url(#gW)"/>
<polygon points="137.3,170.0 138.3,170.0 139.8,177.0 139.8,190.0 138.5,197.0 137.1,197.0 135.8,190.0 135.8,177.0" fill="#fff" opacity="0.35"/>
<polygon points="137.3,172.0 138.3,172.0 138.9,179.0 138.9,189.0 138.5,196.0 137.1,196.0 136.7,189.0 136.7,179.0" fill="#fff" opacity="0.80"/>
<polygon points="135.8,199 139.8,199 138.6,253 137.1,253" fill="url(#gR)"/>
<polygon points="136.7,199 138.9,199 138.3,238 137.3,238" fill="url(#gW)"/>
<polygon points="226.0,170.0 227.0,170.0 231.7,177.0 231.7,190.0 227.2,197.0 225.8,197.0 221.3,190.0 221.3,177.0" fill="#fff" opacity="0.35"/>
<polygon points="226.0,172.0 227.0,172.0 229.4,179.0 229.4,189.0 227.2,196.0 225.8,196.0 223.6,189.0 223.6,179.0" fill="#fff" opacity="0.80"/>
<polygon points="221.3,199 231.7,199 227.2,273 225.8,273" fill="url(#gR)"/>
<polygon points="223.6,199 229.4,199 227.0,258 226.0,258" fill="url(#gW)"/>
<polygon points="233.3,170.0 234.3,170.0 237.0,177.0 237.0,190.0 234.5,197.0 233.1,197.0 230.6,190.0 230.6,177.0" fill="#fff" opacity="0.35"/>
<polygon points="233.3,172.0 234.3,172.0 235.6,179.0 235.6,189.0 234.5,196.0 233.1,196.0 232.0,189.0 232.0,179.0" fill="#fff" opacity="0.80"/>
<polygon points="230.6,199 237.0,199 234.6,259 233.1,259" fill="url(#gR)"/>
<polygon points="232.0,199 235.6,199 234.3,244 233.3,244" fill="url(#gW)"/>
<polygon points="411.8,170.0 412.8,170.0 416.3,177.0 416.3,190.0 413.0,197.0 411.6,197.0 408.3,190.0 408.3,177.0" fill="#fff" opacity="0.35"/>
<polygon points="411.8,172.0 412.8,172.0 414.6,179.0 414.6,189.0 413.0,196.0 411.6,196.0 410.1,189.0 410.1,179.0" fill="#fff" opacity="0.80"/>
<polygon points="408.3,199 416.3,199 413.1,253 411.6,253" fill="url(#gR)"/>
<polygon points="410.1,199 414.6,199 412.8,238 411.8,238" fill="url(#gW)"/>
<polygon points="420.0,170.0 421.0,170.0 424.9,177.0 424.9,190.0 421.2,197.0 419.8,197.0 416.1,190.0 416.1,177.0" fill="#fff" opacity="0.35"/>
<polygon points="420.0,172.0 421.0,172.0 423.0,179.0 423.0,189.0 421.2,196.0 419.8,196.0 418.0,189.0 418.0,179.0" fill="#fff" opacity="0.80"/>
<polygon points="416.1,199 424.9,199 421.2,259 419.8,259" fill="url(#gR)"/>
<polygon points="418.0,199 423.0,199 421.0,244 420.0,244" fill="url(#gW)"/>
<polygon points="442.5,170.0 443.5,170.0 446.2,177.0 446.2,190.0 443.7,197.0 442.3,197.0 439.8,190.0 439.8,177.0" fill="#fff" opacity="0.35"/>
<polygon points="442.5,172.0 443.5,172.0 444.8,179.0 444.8,189.0 443.7,196.0 442.3,196.0 441.2,189.0 441.2,179.0" fill="#fff" opacity="0.80"/>
<polygon points="439.8,199 446.2,199 443.8,267 442.2,267" fill="url(#gR)"/>
<polygon points="441.2,199 444.8,199 443.5,252 442.5,252" fill="url(#gW)"/>
<polygon points="501.2,170.0 502.2,170.0 504.9,177.0 504.9,190.0 502.4,197.0 501.0,197.0 498.5,190.0 498.5,177.0" fill="#fff" opacity="0.35"/>
<polygon points="501.2,172.0 502.2,172.0 503.5,179.0 503.5,189.0 502.4,196.0 501.0,196.0 499.9,189.0 499.9,179.0" fill="#fff" opacity="0.80"/>
<polygon points="498.5,199 504.9,199 502.4,253 500.9,253" fill="url(#gR)"/>
<polygon points="499.9,199 503.5,199 502.2,238 501.2,238" fill="url(#gW)"/>
<polygon points="520.0,170.0 521.0,170.0 523.7,177.0 523.7,190.0 521.2,197.0 519.8,197.0 517.3,190.0 517.3,177.0" fill="#fff" opacity="0.35"/>
<polygon points="520.0,172.0 521.0,172.0 522.3,179.0 522.3,189.0 521.2,196.0 519.8,196.0 518.7,189.0 518.7,179.0" fill="#fff" opacity="0.80"/>
<polygon points="517.3,199 523.7,199 521.2,261 519.8,261" fill="url(#gR)"/>
<polygon points="518.7,199 522.3,199 521.0,246 520.0,246" fill="url(#gW)"/>
<polygon points="599.5,170.0 600.5,170.0 602.4,177.0 602.4,190.0 600.7,197.0 599.3,197.0 597.6,190.0 597.6,177.0" fill="#fff" opacity="0.35"/>
<polygon points="599.5,172.0 600.5,172.0 601.4,179.0 601.4,189.0 600.7,196.0 599.3,196.0 598.6,189.0 598.6,179.0" fill="#fff" opacity="0.80"/>
<polygon points="597.6,199 602.4,199 600.8,261 599.2,261" fill="url(#gR)"/>
<polygon points="598.6,199 601.4,199 600.5,246 599.5,246" fill="url(#gW)"/>
<polygon points="628.5,170.0 629.5,170.0 631.4,177.0 631.4,190.0 629.7,197.0 628.3,197.0 626.6,190.0 626.6,177.0" fill="#fff" opacity="0.35"/>
<polygon points="628.5,172.0 629.5,172.0 630.4,179.0 630.4,189.0 629.7,196.0 628.3,196.0 627.6,189.0 627.6,179.0" fill="#fff" opacity="0.80"/>
<polygon points="626.6,199 631.4,199 629.8,265 628.2,265" fill="url(#gR)"/>
<polygon points="627.6,199 630.4,199 629.5,250 628.5,250" fill="url(#gW)"/>
<polygon points="674.5,170.0 675.5,170.0 679.4,177.0 679.4,190.0 675.7,197.0 674.3,197.0 670.6,190.0 670.6,177.0" fill="#fff" opacity="0.35"/>
<polygon points="674.5,172.0 675.5,172.0 677.5,179.0 677.5,189.0 675.7,196.0 674.3,196.0 672.5,189.0 672.5,179.0" fill="#fff" opacity="0.80"/>
<polygon points="670.6,199 679.4,199 675.8,259 674.2,259" fill="url(#gR)"/>
<polygon points="672.5,199 677.5,199 675.5,244 674.5,244" fill="url(#gW)"/>
<polygon points="283.5,170.0 284.5,170.0 289.6,177.0 289.6,190.0 284.7,197.0 283.3,197.0 278.4,190.0 278.4,177.0" fill="#fff" opacity="0.35"/>
<polygon points="283.5,172.0 284.5,172.0 287.1,179.0 287.1,189.0 284.7,196.0 283.3,196.0 280.9,189.0 280.9,179.0" fill="#fff" opacity="0.80"/>
<polygon points="278.4,199 289.6,199 284.8,243 283.2,243" fill="url(#gR)"/>
<polygon points="280.9,199 287.1,199 284.5,228 283.5,228" fill="url(#gW)"/>
<polygon points="151.5,170.0 152.5,170.0 153.6,177.0 153.6,190.0 152.7,197.0 151.3,197.0 150.4,190.0 150.4,177.0" fill="#fff" opacity="0.35"/>
<polygon points="151.5,172.0 152.5,172.0 152.9,179.0 152.9,189.0 152.7,196.0 151.3,196.0 151.1,189.0 151.1,179.0" fill="#fff" opacity="0.80"/>
<polygon points="150.4,199 153.6,199 152.8,245 151.2,245" fill="url(#gR)"/>
<polygon points="151.1,199 152.9,199 152.5,230 151.5,230" fill="url(#gW)"/>
<polygon points="160.0,170.0 161.0,170.0 161.7,177.0 161.7,190.0 161.2,197.0 159.8,197.0 159.3,190.0 159.3,177.0" fill="#fff" opacity="0.35"/>
<polygon points="160.0,172.0 161.0,172.0 161.2,179.0 161.2,189.0 161.2,196.0 159.8,196.0 159.8,189.0 159.8,179.0" fill="#fff" opacity="0.80"/>
<polygon points="159.3,199 161.7,199 161.2,265 159.8,265" fill="url(#gR)"/>
<polygon points="159.8,199 161.2,199 161.0,250 160.0,250" fill="url(#gW)"/>
<polygon points="317.5,170.0 318.5,170.0 319.6,177.0 319.6,190.0 318.7,197.0 317.3,197.0 316.4,190.0 316.4,177.0" fill="#fff" opacity="0.35"/>
<polygon points="317.5,172.0 318.5,172.0 318.9,179.0 318.9,189.0 318.7,196.0 317.3,196.0 317.1,189.0 317.1,179.0" fill="#fff" opacity="0.80"/>
<polygon points="316.4,199 319.6,199 318.8,245 317.2,245" fill="url(#gR)"/>
<polygon points="317.1,199 318.9,199 318.5,230 317.5,230" fill="url(#gW)"/>
<polygon points="454.5,170.0 455.5,170.0 456.6,177.0 456.6,190.0 455.7,197.0 454.3,197.0 453.4,190.0 453.4,177.0" fill="#fff" opacity="0.35"/>
<polygon points="454.5,172.0 455.5,172.0 455.9,179.0 455.9,189.0 455.7,196.0 454.3,196.0 454.1,189.0 454.1,179.0" fill="#fff" opacity="0.80"/>
<polygon points="453.4,199 456.6,199 455.8,255 454.2,255" fill="url(#gR)"/>
<polygon points="454.1,199 455.9,199 455.5,240 454.5,240" fill="url(#gW)"/>
<polygon points="548.5,170.0 549.5,170.0 550.6,177.0 550.6,190.0 549.7,197.0 548.3,197.0 547.4,190.0 547.4,177.0" fill="#fff" opacity="0.35"/>
<polygon points="548.5,172.0 549.5,172.0 549.9,179.0 549.9,189.0 549.7,196.0 548.3,196.0 548.1,189.0 548.1,179.0" fill="#fff" opacity="0.80"/>
<polygon points="547.4,199 550.6,199 549.8,251 548.2,251" fill="url(#gR)"/>
<polygon points="548.1,199 549.9,199 549.5,236 548.5,236" fill="url(#gW)"/>
<polygon points="586.5,170.0 587.5,170.0 588.2,177.0 588.2,190.0 587.7,197.0 586.3,197.0 585.8,190.0 585.8,177.0" fill="#fff" opacity="0.35"/>
<polygon points="586.5,172.0 587.5,172.0 587.7,179.0 587.7,189.0 587.7,196.0 586.3,196.0 586.3,189.0 586.3,179.0" fill="#fff" opacity="0.80"/>
<polygon points="585.8,199 588.2,199 587.8,247 586.2,247" fill="url(#gR)"/>
<polygon points="586.3,199 587.7,199 587.5,232 586.5,232" fill="url(#gW)"/>
<polygon points="654.5,170.0 655.5,170.0 656.6,177.0 656.6,190.0 655.7,197.0 654.3,197.0 653.4,190.0 653.4,177.0" fill="#fff" opacity="0.35"/>
<polygon points="654.5,172.0 655.5,172.0 655.9,179.0 655.9,189.0 655.7,196.0 654.3,196.0 654.1,189.0 654.1,179.0" fill="#fff" opacity="0.80"/>
<polygon points="653.4,199 656.6,199 655.8,253 654.2,253" fill="url(#gR)"/>
<polygon points="654.1,199 655.9,199 655.5,238 654.5,238" fill="url(#gW)"/>
<polygon points="369.5,170.0 370.5,170.0 371.6,177.0 371.6,190.0 370.7,197.0 369.3,197.0 368.4,190.0 368.4,177.0" fill="#fff" opacity="0.35"/>
<polygon points="369.5,172.0 370.5,172.0 370.9,179.0 370.9,189.0 370.7,196.0 369.3,196.0 369.1,189.0 369.1,179.0" fill="#fff" opacity="0.80"/>
<polygon points="368.4,199 371.6,199 370.8,251 369.2,251" fill="url(#gR)"/>
<polygon points="369.1,199 370.9,199 370.5,236 369.5,236" fill="url(#gW)"/>
<polygon points="505.5,170.0 506.5,170.0 507.2,177.0 507.2,190.0 506.7,197.0 505.3,197.0 504.8,190.0 504.8,177.0" fill="#fff" opacity="0.35"/>
<polygon points="505.5,172.0 506.5,172.0 506.7,179.0 506.7,189.0 506.7,196.0 505.3,196.0 505.3,189.0 505.3,179.0" fill="#fff" opacity="0.80"/>
<polygon points="504.8,199 507.2,199 506.8,245 505.2,245" fill="url(#gR)"/>
<polygon points="505.3,199 506.7,199 506.5,230 505.5,230" fill="url(#gW)"/>
<polygon points="280,199 289,199 289,230 287,290 285,290 281,230" fill="url(#gR)"/>
<polygon points="100.5,170.0 101.5,170.0 102.6,177.0 102.6,190.0 101.7,197.0 100.3,197.0 99.4,190.0 99.4,177.0" fill="#fff" opacity="0.50"/>
<polygon points="99.9,199 102.1,199 101.3,243 100.7,243" fill="url(#gR)"/>
<rect x="101" y="170" width="1" height="149" fill="url(#gT)"/>
<polygon points="109.8,170.0 110.8,170.0 111.9,177.0 111.9,190.0 111.0,197.0 109.6,197.0 108.7,190.0 108.7,177.0" fill="#fff" opacity="0.50"/>
<polygon points="109.2,199 111.4,199 110.6,244 110.0,244" fill="url(#gR)"/>
<rect x="110" y="170" width="1" height="149" fill="url(#gT)"/>
<polygon points="125.5,170.0 126.5,170.0 127.6,177.0 127.6,190.0 126.7,197.0 125.3,197.0 124.4,190.0 124.4,177.0" fill="#fff" opacity="0.50"/>
<polygon points="124.9,199 127.1,199 126.3,250 125.7,250" fill="url(#gR)"/>
<rect x="126" y="170" width="1" height="149" fill="url(#gT)"/>
<polygon points="142.8,170.0 143.8,170.0 144.9,177.0 144.9,190.0 144.0,197.0 142.6,197.0 141.7,190.0 141.7,177.0" fill="#fff" opacity="0.50"/>
<polygon points="142.2,199 144.4,199 143.6,226 143.0,226" fill="url(#gR)"/>
<rect x="143" y="170" width="1" height="149" fill="url(#gT)"/>
<polygon points="172.5,170.0 173.5,170.0 174.6,177.0 174.6,190.0 173.7,197.0 172.3,197.0 171.4,190.0 171.4,177.0" fill="#fff" opacity="0.50"/>
<polygon points="171.9,199 174.1,199 173.3,240 172.7,240" fill="url(#gR)"/>
<rect x="173" y="170" width="1" height="149" fill="url(#gT)"/>
<polygon points="179.3,170.0 180.3,170.0 181.4,177.0 181.4,190.0 180.5,197.0 179.1,197.0 178.2,190.0 178.2,177.0" fill="#fff" opacity="0.50"/>
<polygon points="178.7,199 180.9,199 180.1,243 179.5,243" fill="url(#gR)"/>
<rect x="179" y="170" width="1" height="149" fill="url(#gT)"/>
<polygon points="190.3,170.0 191.3,170.0 192.4,177.0 192.4,190.0 191.5,197.0 190.1,197.0 189.2,190.0 189.2,177.0" fill="#fff" opacity="0.50"/>
<polygon points="189.7,199 191.9,199 191.1,231 190.5,231" fill="url(#gR)"/>
<rect x="190" y="170" width="1" height="149" fill="url(#gT)"/>
<polygon points="207.5,170.0 208.5,170.0 209.6,177.0 209.6,190.0 208.7,197.0 207.3,197.0 206.4,190.0 206.4,177.0" fill="#fff" opacity="0.50"/>
<polygon points="206.9,199 209.1,199 208.3,235 207.7,235" fill="url(#gR)"/>
<rect x="208" y="170" width="1" height="149" fill="url(#gT)"/>
<polygon points="217.5,170.0 218.5,170.0 219.6,177.0 219.6,190.0 218.7,197.0 217.3,197.0 216.4,190.0 216.4,177.0" fill="#fff" opacity="0.50"/>
<polygon points="216.9,199 219.1,199 218.3,226 217.7,226" fill="url(#gR)"/>
<rect x="218" y="170" width="1" height="149" fill="url(#gT)"/>
<polygon points="258.4,170.0 259.4,170.0 260.5,177.0 260.5,190.0 259.6,197.0 258.2,197.0 257.3,190.0 257.3,177.0" fill="#fff" opacity="0.50"/>
<polygon points="257.8,199 260.0,199 259.2,230 258.6,230" fill="url(#gR)"/>
<rect x="258" y="170" width="1" height="149" fill="url(#gT)"/>
<polygon points="274.1,170.0 275.1,170.0 276.2,177.0 276.2,190.0 275.3,197.0 273.9,197.0 273.0,190.0 273.0,177.0" fill="#fff" opacity="0.50"/>
<polygon points="273.5,199 275.7,199 274.9,234 274.3,234" fill="url(#gR)"/>
<rect x="274" y="170" width="1" height="149" fill="url(#gT)"/>
<polygon points="290.3,170.0 291.3,170.0 292.4,177.0 292.4,190.0 291.5,197.0 290.1,197.0 289.2,190.0 289.2,177.0" fill="#fff" opacity="0.50"/>
<polygon points="289.7,199 291.9,199 291.1,227 290.5,227" fill="url(#gR)"/>
<rect x="290" y="170" width="1" height="149" fill="url(#gT)"/>
<polygon points="302.8,170.0 303.8,170.0 304.9,177.0 304.9,190.0 304.0,197.0 302.6,197.0 301.7,190.0 301.7,177.0" fill="#fff" opacity="0.50"/>
<polygon points="302.2,199 304.4,199 303.6,231 303.0,231" fill="url(#gR)"/>
<rect x="303" y="170" width="1" height="149" fill="url(#gT)"/>
<polygon points="313.8,170.0 314.8,170.0 315.9,177.0 315.9,190.0 315.0,197.0 313.6,197.0 312.7,190.0 312.7,177.0" fill="#fff" opacity="0.50"/>
<polygon points="313.2,199 315.4,199 314.6,248 314.0,248" fill="url(#gR)"/>
<rect x="314" y="170" width="1" height="149" fill="url(#gT)"/>
<polygon points="325.5,170.0 326.5,170.0 327.6,177.0 327.6,190.0 326.7,197.0 325.3,197.0 324.4,190.0 324.4,177.0" fill="#fff" opacity="0.50"/>
<polygon points="324.9,199 327.1,199 326.3,239 325.7,239" fill="url(#gR)"/>
<rect x="326" y="170" width="1" height="149" fill="url(#gT)"/>
<polygon points="345.1,170.0 346.1,170.0 347.2,177.0 347.2,190.0 346.3,197.0 344.9,197.0 344.0,190.0 344.0,177.0" fill="#fff" opacity="0.50"/>
<polygon points="344.5,199 346.7,199 345.9,238 345.3,238" fill="url(#gR)"/>
<rect x="345" y="170" width="1" height="149" fill="url(#gT)"/>
<polygon points="361.5,170.0 362.5,170.0 363.6,177.0 363.6,190.0 362.7,197.0 361.3,197.0 360.4,190.0 360.4,177.0" fill="#fff" opacity="0.50"/>
<polygon points="360.9,199 363.1,199 362.3,249 361.7,249" fill="url(#gR)"/>
<rect x="362" y="170" width="1" height="149" fill="url(#gT)"/>
<polygon points="372.5,170.0 373.5,170.0 374.6,177.0 374.6,190.0 373.7,197.0 372.3,197.0 371.4,190.0 371.4,177.0" fill="#fff" opacity="0.50"/>
<polygon points="371.9,199 374.1,199 373.3,239 372.7,239" fill="url(#gR)"/>
<rect x="373" y="170" width="1" height="149" fill="url(#gT)"/>
<polygon points="388.7,170.0 389.7,170.0 390.8,177.0 390.8,190.0 389.9,197.0 388.5,197.0 387.6,190.0 387.6,177.0" fill="#fff" opacity="0.50"/>
<polygon points="388.1,199 390.3,199 389.5,250 388.9,250" fill="url(#gR)"/>
<rect x="389" y="170" width="1" height="149" fill="url(#gT)"/>
<polygon points="401.2,170.0 402.2,170.0 403.3,177.0 403.3,190.0 402.4,197.0 401.0,197.0 400.1,190.0 400.1,177.0" fill="#fff" opacity="0.50"/>
<polygon points="400.6,199 402.8,199 402.0,241 401.4,241" fill="url(#gR)"/>
<rect x="401" y="170" width="1" height="149" fill="url(#gT)"/>
<polygon points="463.9,170.0 464.9,170.0 466.0,177.0 466.0,190.0 465.1,197.0 463.7,197.0 462.8,190.0 462.8,177.0" fill="#fff" opacity="0.50"/>
<polygon points="463.3,199 465.5,199 464.7,245 464.1,245" fill="url(#gR)"/>
<rect x="464" y="170" width="1" height="149" fill="url(#gT)"/>
<polygon points="472.5,170.0 473.5,170.0 474.6,177.0 474.6,190.0 473.7,197.0 472.3,197.0 471.4,190.0 471.4,177.0" fill="#fff" opacity="0.50"/>
<polygon points="471.9,199 474.1,199 473.3,227 472.7,227" fill="url(#gR)"/>
<rect x="473" y="170" width="1" height="149" fill="url(#gT)"/>
<polygon points="481.5,170.0 482.5,170.0 483.6,177.0 483.6,190.0 482.7,197.0 481.3,197.0 480.4,190.0 480.4,177.0" fill="#fff" opacity="0.50"/>
<polygon points="480.9,199 483.1,199 482.3,240 481.7,240" fill="url(#gR)"/>
<rect x="482" y="170" width="1" height="149" fill="url(#gT)"/>
<polygon points="513.8,170.0 514.8,170.0 515.9,177.0 515.9,190.0 515.0,197.0 513.6,197.0 512.7,190.0 512.7,177.0" fill="#fff" opacity="0.50"/>
<polygon points="513.2,199 515.4,199 514.6,244 514.0,244" fill="url(#gR)"/>
<rect x="514" y="170" width="1" height="149" fill="url(#gT)"/>
<polygon points="525.5,170.0 526.5,170.0 527.6,177.0 527.6,190.0 526.7,197.0 525.3,197.0 524.4,190.0 524.4,177.0" fill="#fff" opacity="0.50"/>
<polygon points="524.9,199 527.1,199 526.3,226 525.7,226" fill="url(#gR)"/>
<rect x="526" y="170" width="1" height="149" fill="url(#gT)"/>
<polygon points="531.8,170.0 532.8,170.0 533.9,177.0 533.9,190.0 533.0,197.0 531.6,197.0 530.7,190.0 530.7,177.0" fill="#fff" opacity="0.50"/>
<polygon points="531.2,199 533.4,199 532.6,248 532.0,248" fill="url(#gR)"/>
<rect x="532" y="170" width="1" height="149" fill="url(#gT)"/>
<polygon points="545.9,170.0 546.9,170.0 548.0,177.0 548.0,190.0 547.1,197.0 545.7,197.0 544.8,190.0 544.8,177.0" fill="#fff" opacity="0.50"/>
<polygon points="545.3,199 547.5,199 546.7,229 546.1,229" fill="url(#gR)"/>
<rect x="546" y="170" width="1" height="149" fill="url(#gT)"/>
<polygon points="564.7,170.0 565.7,170.0 566.8,177.0 566.8,190.0 565.9,197.0 564.5,197.0 563.6,190.0 563.6,177.0" fill="#fff" opacity="0.50"/>
<polygon points="564.1,199 566.3,199 565.5,237 564.9,237" fill="url(#gR)"/>
<rect x="565" y="170" width="1" height="149" fill="url(#gT)"/>
<polygon points="580.9,170.0 581.9,170.0 583.0,177.0 583.0,190.0 582.1,197.0 580.7,197.0 579.8,190.0 579.8,177.0" fill="#fff" opacity="0.50"/>
<polygon points="580.3,199 582.5,199 581.7,229 581.1,229" fill="url(#gR)"/>
<rect x="581" y="170" width="1" height="149" fill="url(#gT)"/>
<polygon points="593.4,170.0 594.4,170.0 595.5,177.0 595.5,190.0 594.6,197.0 593.2,197.0 592.3,190.0 592.3,177.0" fill="#fff" opacity="0.50"/>
<polygon points="592.8,199 595.0,199 594.2,237 593.6,237" fill="url(#gR)"/>
<rect x="593" y="170" width="1" height="149" fill="url(#gT)"/>
<polygon points="616.1,170.0 617.1,170.0 618.2,177.0 618.2,190.0 617.3,197.0 615.9,197.0 615.0,190.0 615.0,177.0" fill="#fff" opacity="0.50"/>
<polygon points="615.5,199 617.7,199 616.9,240 616.3,240" fill="url(#gR)"/>
<rect x="616" y="170" width="1" height="149" fill="url(#gT)"/>
<polygon points="642.8,170.0 643.8,170.0 644.9,177.0 644.9,190.0 644.0,197.0 642.6,197.0 641.7,190.0 641.7,177.0" fill="#fff" opacity="0.50"/>
<polygon points="642.2,199 644.4,199 643.6,226 643.0,226" fill="url(#gR)"/>
<rect x="643" y="170" width="1" height="149" fill="url(#gT)"/>
<polygon points="658.5,170.0 659.5,170.0 660.6,177.0 660.6,190.0 659.7,197.0 658.3,197.0 657.4,190.0 657.4,177.0" fill="#fff" opacity="0.50"/>
<polygon points="657.9,199 660.1,199 659.3,249 658.7,249" fill="url(#gR)"/>
<rect x="659" y="170" width="1" height="149" fill="url(#gT)"/>
<polygon points="666.3,170.0 667.3,170.0 668.4,177.0 668.4,190.0 667.5,197.0 666.1,197.0 665.2,190.0 665.2,177.0" fill="#fff" opacity="0.50"/>
<polygon points="665.7,199 667.9,199 667.1,236 666.5,236" fill="url(#gR)"/>
<rect x="666" y="170" width="1" height="149" fill="url(#gT)"/>
<polygon points="688.2,170.0 689.2,170.0 690.3,177.0 690.3,190.0 689.4,197.0 688.0,197.0 687.1,190.0 687.1,177.0" fill="#fff" opacity="0.50"/>
<polygon points="687.6,199 689.8,199 689.0,238 688.4,238" fill="url(#gR)"/>
<rect x="688" y="170" width="1" height="149" fill="url(#gT)"/>
<polygon points="90.0,262 92.0,262 93.0,281 89.0,281" fill="#fff" opacity="0.42"/>
<rect x="89.0" y="290" width="4" height="10" fill="#fff" opacity="0.18"/>
<polygon points="105.1,262 107.1,262 108.1,281 104.1,281" fill="#fff" opacity="0.42"/>
<rect x="104.1" y="290" width="4" height="10" fill="#fff" opacity="0.18"/>
<polygon points="120.9,262 122.9,262 123.9,281 119.9,281" fill="#fff" opacity="0.42"/>
<rect x="119.9" y="290" width="4" height="10" fill="#fff" opacity="0.18"/>
<polygon points="136.1,262 138.1,262 139.1,281 135.1,281" fill="#fff" opacity="0.42"/>
<rect x="135.1" y="290" width="4" height="10" fill="#fff" opacity="0.18"/>
<polygon points="151.2,262 153.2,262 154.2,281 150.2,281" fill="#fff" opacity="0.42"/>
<rect x="150.2" y="290" width="4" height="10" fill="#fff" opacity="0.18"/>
<polygon points="166.2,262 168.2,262 169.2,281 165.2,281" fill="#fff" opacity="0.42"/>
<rect x="165.2" y="290" width="4" height="10" fill="#fff" opacity="0.18"/>
<polygon points="181.7,262 183.7,262 184.7,281 180.7,281" fill="#fff" opacity="0.42"/>
<rect x="180.7" y="290" width="4" height="10" fill="#fff" opacity="0.18"/>
<polygon points="195.6,262 197.6,262 198.6,281 194.6,281" fill="#fff" opacity="0.42"/>
<rect x="194.6" y="290" width="4" height="10" fill="#fff" opacity="0.18"/>
<polygon points="210.8,262 212.8,262 213.8,281 209.8,281" fill="#fff" opacity="0.42"/>
<rect x="209.8" y="290" width="4" height="10" fill="#fff" opacity="0.18"/>
<polygon points="225.9,262 227.9,262 228.9,281 224.9,281" fill="#fff" opacity="0.42"/>
<rect x="224.9" y="290" width="4" height="10" fill="#fff" opacity="0.18"/>
<polygon points="239.8,262 241.8,262 242.8,281 238.8,281" fill="#fff" opacity="0.42"/>
<rect x="238.8" y="290" width="4" height="10" fill="#fff" opacity="0.18"/>
<polygon points="254.5,262 256.5,262 257.5,281 253.5,281" fill="#fff" opacity="0.42"/>
<rect x="253.5" y="290" width="4" height="10" fill="#fff" opacity="0.18"/>
<polygon points="267.9,262 269.9,262 270.9,281 266.9,281" fill="#fff" opacity="0.42"/>
<rect x="266.9" y="290" width="4" height="10" fill="#fff" opacity="0.18"/>
<polygon points="281.7,262 283.7,262 284.7,281 280.7,281" fill="#fff" opacity="0.42"/>
<rect x="280.7" y="290" width="4" height="10" fill="#fff" opacity="0.18"/>
<polygon points="296.8,262 298.8,262 299.8,281 295.8,281" fill="#fff" opacity="0.42"/>
<rect x="295.8" y="290" width="4" height="10" fill="#fff" opacity="0.18"/>
<polygon points="310.9,262 312.9,262 313.9,281 309.9,281" fill="#fff" opacity="0.42"/>
<rect x="309.9" y="290" width="4" height="10" fill="#fff" opacity="0.18"/>
<polygon points="325.9,262 327.9,262 328.9,281 324.9,281" fill="#fff" opacity="0.42"/>
<rect x="324.9" y="290" width="4" height="10" fill="#fff" opacity="0.18"/>
<polygon points="341.4,262 343.4,262 344.4,281 340.4,281" fill="#fff" opacity="0.42"/>
<rect x="340.4" y="290" width="4" height="10" fill="#fff" opacity="0.18"/>
<polygon points="355.2,262 357.2,262 358.2,281 354.2,281" fill="#fff" opacity="0.42"/>
<rect x="354.2" y="290" width="4" height="10" fill="#fff" opacity="0.18"/>
<polygon points="369.4,262 371.4,262 372.4,281 368.4,281" fill="#fff" opacity="0.42"/>
<rect x="368.4" y="290" width="4" height="10" fill="#fff" opacity="0.18"/>
<polygon points="382.5,262 384.5,262 385.5,281 381.5,281" fill="#fff" opacity="0.42"/>
<rect x="381.5" y="290" width="4" height="10" fill="#fff" opacity="0.18"/>
<polygon points="398.1,262 400.1,262 401.1,281 397.1,281" fill="#fff" opacity="0.42"/>
<rect x="397.1" y="290" width="4" height="10" fill="#fff" opacity="0.18"/>
<polygon points="412.2,262 414.2,262 415.2,281 411.2,281" fill="#fff" opacity="0.42"/>
<rect x="411.2" y="290" width="4" height="10" fill="#fff" opacity="0.18"/>
<polygon points="427.4,262 429.4,262 430.4,281 426.4,281" fill="#fff" opacity="0.42"/>
<rect x="426.4" y="290" width="4" height="10" fill="#fff" opacity="0.18"/>
<polygon points="441.5,262 443.5,262 444.5,281 440.5,281" fill="#fff" opacity="0.42"/>
<rect x="440.5" y="290" width="4" height="10" fill="#fff" opacity="0.18"/>
<polygon points="455.7,262 457.7,262 458.7,281 454.7,281" fill="#fff" opacity="0.42"/>
<rect x="454.7" y="290" width="4" height="10" fill="#fff" opacity="0.18"/>
<polygon points="468.8,262 470.8,262 471.8,281 467.8,281" fill="#fff" opacity="0.42"/>
<rect x="467.8" y="290" width="4" height="10" fill="#fff" opacity="0.18"/>
<polygon points="482.9,262 484.9,262 485.9,281 481.9,281" fill="#fff" opacity="0.42"/>
<rect x="481.9" y="290" width="4" height="10" fill="#fff" opacity="0.18"/>
<polygon points="498.1,262 500.1,262 501.1,281 497.1,281" fill="#fff" opacity="0.42"/>
<rect x="497.1" y="290" width="4" height="10" fill="#fff" opacity="0.18"/>
<polygon points="512.2,262 514.2,262 515.2,281 511.2,281" fill="#fff" opacity="0.42"/>
<rect x="511.2" y="290" width="4" height="10" fill="#fff" opacity="0.18"/>
<polygon points="526.4,262 528.4,262 529.4,281 525.4,281" fill="#fff" opacity="0.42"/>
<rect x="525.4" y="290" width="4" height="10" fill="#fff" opacity="0.18"/>
<polygon points="540.5,262 542.5,262 543.5,281 539.5,281" fill="#fff" opacity="0.42"/>
<rect x="539.5" y="290" width="4" height="10" fill="#fff" opacity="0.18"/>
<polygon points="556.2,262 558.2,262 559.2,281 555.2,281" fill="#fff" opacity="0.42"/>
<rect x="555.2" y="290" width="4" height="10" fill="#fff" opacity="0.18"/>
<polygon points="570.3,262 572.3,262 573.3,281 569.3,281" fill="#fff" opacity="0.42"/>
<rect x="569.3" y="290" width="4" height="10" fill="#fff" opacity="0.18"/>
<polygon points="584.5,262 586.5,262 587.5,281 583.5,281" fill="#fff" opacity="0.42"/>
<rect x="583.5" y="290" width="4" height="10" fill="#fff" opacity="0.18"/>
<polygon points="598.6,262 600.6,262 601.6,281 597.6,281" fill="#fff" opacity="0.42"/>
<rect x="597.6" y="290" width="4" height="10" fill="#fff" opacity="0.18"/>
<polygon points="612.7,262 614.7,262 615.7,281 611.7,281" fill="#fff" opacity="0.42"/>
<rect x="611.7" y="290" width="4" height="10" fill="#fff" opacity="0.18"/>
<polygon points="626.9,262 628.9,262 629.9,281 625.9,281" fill="#fff" opacity="0.42"/>
<rect x="625.9" y="290" width="4" height="10" fill="#fff" opacity="0.18"/>
<polygon points="641.0,262 643.0,262 644.0,281 640.0,281" fill="#fff" opacity="0.42"/>
<rect x="640.0" y="290" width="4" height="10" fill="#fff" opacity="0.18"/>
<polygon points="655.2,262 657.2,262 658.2,281 654.2,281" fill="#fff" opacity="0.42"/>
<rect x="654.2" y="290" width="4" height="10" fill="#fff" opacity="0.18"/>
<polygon points="670.3,262 672.3,262 673.3,281 669.3,281" fill="#fff" opacity="0.42"/>
<rect x="669.3" y="290" width="4" height="10" fill="#fff" opacity="0.18"/>
<polygon points="684.5,262 686.5,262 687.5,281 683.5,281" fill="#fff" opacity="0.42"/>
<rect x="683.5" y="290" width="4" height="10" fill="#fff" opacity="0.18"/>
<rect x="79" y="256" width="614" height="1" fill="rgb(158,158,158)" opacity="0.7"/>
<rect x="79" y="263" width="614" height="1" fill="rgb(158,158,158)" opacity="0.8"/>
<rect x="185" y="268" width="508" height="1" fill="rgb(158,158,158)" opacity="0.7"/>
<rect x="185" y="267" width="508" height="1" fill="rgb(63,63,63)" opacity="0.25"/>
<rect x="140" y="239" width="553" height="1" fill="rgb(153,153,153)" opacity="0.6"/>
<rect x="79" y="245" width="614" height="1" fill="rgb(153,153,153)" opacity="0.5"/>
<rect x="79" y="250" width="614" height="1" fill="rgb(127,127,127)" opacity="0.4"/>
<rect x="79" y="258" width="614" height="1" fill="rgb(76,76,76)" opacity="0.15"/>
<rect x="79" y="215" width="614" height="1" fill="rgb(140,140,140)" opacity="0.3"/>
<rect x="79" y="253" width="614" height="1" fill="rgb(127,127,127)" opacity="0.3"/>
<rect x="79" y="228" width="614" height="1" fill="rgb(140,140,140)" opacity="0.25"/>
<rect x="300" y="233" width="393" height="1" fill="rgb(140,140,140)" opacity="0.3"/>
<rect x="79" y="197" width="614" height="1" fill="rgb(40,40,40)" opacity="0.8"/>
<rect x="79" y="198" width="614" height="1" fill="rgb(70,70,70)" opacity="0.65"/>
<rect x="79" y="196" width="614" height="1" fill="rgb(90,90,90)" opacity="0.4"/>
<rect x="79" y="199" width="614" height="1" fill="rgb(90,90,90)" opacity="0.4"/>
<rect x="79" y="167" width="614" height="2" fill="rgb(25,25,25)"/>
</g>
<linearGradient id="cb" x1="0" y1="0" x2="0" y2="1">
<stop offset="0" stop-color="#fff0f0"/>
<stop offset="0.047" stop-color="#ffd8d8"/>
<stop offset="0.113" stop-color="#ffa8a8"/>
<stop offset="0.17" stop-color="#ff7070"/>
<stop offset="0.226" stop-color="#ff4040"/>
<stop offset="0.274" stop-color="#ff0000"/>
<stop offset="0.316" stop-color="#ff4000"/>
<stop offset="0.35" stop-color="#ff8000"/>
<stop offset="0.387" stop-color="#ffc000"/>
<stop offset="0.42" stop-color="#ffff00"/>
<stop offset="0.462" stop-color="#a0ff00"/>
<stop offset="0.5" stop-color="#40ff00"/>
<stop offset="0.557" stop-color="#00ff00"/>
<stop offset="0.632" stop-color="#00ff80"/>
<stop offset="0.7" stop-color="#00ffff"/>
<stop offset="0.75" stop-color="#00b0ff"/>
<stop offset="0.8" stop-color="#0040ff"/>
<stop offset="0.85" stop-color="#0000ff"/>
<stop offset="0.896" stop-color="#0000a0"/>
<stop offset="0.943" stop-color="#000060"/>
<stop offset="1" stop-color="#000010"/>
</linearGradient>
</defs>
<rect width="792" height="612" fill="#fff"/>
<g filter="url(#cmA)"><use href="#sp"/></g>
<g mask="url(#mm)"><g filter="url(#cmB)"><use href="#sp"/></g></g>
<g clip-path="url(#cC)"><g filter="url(#cmC)"><use href="#sp"/></g></g>
<rect x="79" y="319" width="614" height="4" fill="#000" />
<rect x="79" y="332" width="614" height="156" fill="#000" />
<rect x="74" y="126" width="635" height="1" fill="#000" />
<rect x="74" y="157" width="635" height="1" fill="#000" />
<rect x="74" y="166" width="635" height="1" fill="#000" />
<rect x="74" y="322" width="635" height="1" fill="#000" />
<rect x="74" y="332" width="635" height="1" fill="#000" />
<rect x="74" y="488" width="635" height="1" fill="#000" />
<rect x="74" y="497" width="635" height="1" fill="#000" />
<rect x="74" y="528" width="635" height="1" fill="#000" />
<rect x="79" y="126" width="1" height="413" fill="#000" />
<rect x="703" y="126" width="1" height="413" fill="#000" />
<rect x="77" y="134" width="2" height="1" fill="#000" />
<rect x="704" y="134" width="2" height="1" fill="#000" />
<rect x="77" y="142" width="2" height="1" fill="#000" />
<rect x="704" y="142" width="2" height="1" fill="#000" />
<rect x="77" y="149" width="2" height="1" fill="#000" />
<rect x="704" y="149" width="2" height="1" fill="#000" />
<rect x="77" y="505" width="2" height="1" fill="#000" />
<rect x="704" y="505" width="2" height="1" fill="#000" />
<rect x="77" y="513" width="2" height="1" fill="#000" />
<rect x="704" y="513" width="2" height="1" fill="#000" />
<rect x="77" y="520" width="2" height="1" fill="#000" />
<rect x="704" y="520" width="2" height="1" fill="#000" />
<rect x="74" y="166" width="5" height="1" fill="#000" />
<rect x="704" y="166" width="5" height="1" fill="#000" />
<rect x="77" y="175" width="2" height="1" fill="#000" />
<rect x="704" y="175" width="2" height="1" fill="#000" />
<rect x="77" y="182" width="2" height="1" fill="#000" />
<rect x="704" y="182" width="2" height="1" fill="#000" />
<rect x="77" y="190" width="2" height="1" fill="#000" />
<rect x="704" y="190" width="2" height="1" fill="#000" />
<rect x="74" y="198" width="5" height="1" fill="#000" />
<rect x="704" y="198" width="5" height="1" fill="#000" />
<rect x="77" y="206" width="2" height="1" fill="#000" />
<rect x="704" y="206" width="2" height="1" fill="#000" />
<rect x="77" y="214" width="2" height="1" fill="#000" />
<rect x="704" y="214" width="2" height="1" fill="#000" />
<rect x="77" y="221" width="2" height="1" fill="#000" />
<rect x="704" y="221" width="2" height="1" fill="#000" />
<rect x="74" y="229" width="5" height="1" fill="#000" />
<rect x="704" y="229" width="5" height="1" fill="#000" />
<rect x="77" y="237" width="2" height="1" fill="#000" />
<rect x="704" y="237" width="2" height="1" fill="#000" />
<rect x="77" y="245" width="2" height="1" fill="#000" />
<rect x="704" y="245" width="2" height="1" fill="#000" />
<rect x="77" y="252" width="2" height="1" fill="#000" />
<rect x="704" y="252" width="2" height="1" fill="#000" />
<rect x="74" y="260" width="5" height="1" fill="#000" />
<rect x="704" y="260" width="5" height="1" fill="#000" />
<rect x="77" y="268" width="2" height="1" fill="#000" />
<rect x="704" y="268" width="2" height="1" fill="#000" />
<rect x="77" y="276" width="2" height="1" fill="#000" />
<rect x="704" y="276" width="2" height="1" fill="#000" />
<rect x="77" y="284" width="2" height="1" fill="#000" />
<rect x="704" y="284" width="2" height="1" fill="#000" />
<rect x="74" y="291" width="5" height="1" fill="#000" />
<rect x="704" y="291" width="5" height="1" fill="#000" />
<rect x="77" y="299" width="2" height="1" fill="#000" />
<rect x="704" y="299" width="2" height="1" fill="#000" />
<rect x="77" y="307" width="2" height="1" fill="#000" />
<rect x="704" y="307" width="2" height="1" fill="#000" />
<rect x="77" y="315" width="2" height="1" fill="#000" />
<rect x="704" y="315" width="2" height="1" fill="#000" />
<rect x="74" y="322" width="5" height="1" fill="#000" />
<rect x="704" y="322" width="5" height="1" fill="#000" />
<rect x="74" y="332" width="5" height="1" fill="#000" />
<rect x="704" y="332" width="5" height="1" fill="#000" />
<rect x="77" y="340" width="2" height="1" fill="#000" />
<rect x="704" y="340" width="2" height="1" fill="#000" />
<rect x="77" y="348" width="2" height="1" fill="#000" />
<rect x="704" y="348" width="2" height="1" fill="#000" />
<rect x="77" y="355" width="2" height="1" fill="#000" />
<rect x="704" y="355" width="2" height="1" fill="#000" />
<rect x="74" y="363" width="5" height="1" fill="#000" />
<rect x="704" y="363" width="5" height="1" fill="#000" />
<rect x="77" y="371" width="2" height="1" fill="#000" />
<rect x="704" y="371" width="2" height="1" fill="#000" />
<rect x="77" y="379" width="2" height="1" fill="#000" />
<rect x="704" y="379" width="2" height="1" fill="#000" />
<rect x="77" y="387" width="2" height="1" fill="#000" />
<rect x="704" y="387" width="2" height="1" fill="#000" />
<rect x="74" y="395" width="5" height="1" fill="#000" />
<rect x="704" y="395" width="5" height="1" fill="#000" />
<rect x="77" y="402" width="2" height="1" fill="#000" />
<rect x="704" y="402" width="2" height="1" fill="#000" />
<rect x="77" y="410" width="2" height="1" fill="#000" />
<rect x="704" y="410" width="2" height="1" fill="#000" />
<rect x="77" y="418" width="2" height="1" fill="#000" />
<rect x="704" y="418" width="2" height="1" fill="#000" />
<rect x="74" y="426" width="5" height="1" fill="#000" />
<rect x="704" y="426" width="5" height="1" fill="#000" />
<rect x="77" y="434" width="2" height="1" fill="#000" />
<rect x="704" y="434" width="2" height="1" fill="#000" />
<rect x="77" y="441" width="2" height="1" fill="#000" />
<rect x="704" y="441" width="2" height="1" fill="#000" />
<rect x="77" y="449" width="2" height="1" fill="#000" />
<rect x="704" y="449" width="2" height="1" fill="#000" />
<rect x="74" y="457" width="5" height="1" fill="#000" />
<rect x="704" y="457" width="5" height="1" fill="#000" />
<rect x="77" y="465" width="2" height="1" fill="#000" />
<rect x="704" y="465" width="2" height="1" fill="#000" />
<rect x="77" y="473" width="2" height="1" fill="#000" />
<rect x="704" y="473" width="2" height="1" fill="#000" />
<rect x="77" y="480" width="2" height="1" fill="#000" />
<rect x="704" y="480" width="2" height="1" fill="#000" />
<rect x="74" y="488" width="5" height="1" fill="#000" />
<rect x="704" y="488" width="5" height="1" fill="#000" />
<rect x="79" y="126" width="1" height="11" fill="#000" />
<rect x="79" y="147" width="1" height="10" fill="#000" />
<rect x="79" y="157" width="1" height="9" fill="#000" />
<rect x="79" y="322" width="1" height="10" fill="#000" />
<rect x="79" y="488" width="1" height="9" fill="#000" />
<rect x="79" y="528" width="1" height="11" fill="#000" />
<rect x="89" y="127" width="1" height="3" fill="#000" />
<rect x="89" y="154" width="1" height="3" fill="#000" />
<rect x="89" y="163" width="1" height="3" fill="#000" />
<rect x="89" y="323" width="1" height="4" fill="#000" />
<rect x="89" y="328" width="1" height="4" fill="#000" />
<rect x="89" y="489" width="1" height="3" fill="#000" />
<rect x="89" y="494" width="1" height="3" fill="#000" />
<rect x="89" y="529" width="1" height="3" fill="#000" />
<rect x="100" y="127" width="1" height="3" fill="#000" />
<rect x="100" y="154" width="1" height="3" fill="#000" />
<rect x="100" y="163" width="1" height="3" fill="#000" />
<rect x="100" y="323" width="1" height="4" fill="#000" />
<rect x="100" y="328" width="1" height="4" fill="#000" />
<rect x="100" y="489" width="1" height="3" fill="#000" />
<rect x="100" y="494" width="1" height="3" fill="#000" />
<rect x="100" y="529" width="1" height="3" fill="#000" />
<rect x="110" y="127" width="1" height="3" fill="#000" />
<rect x="110" y="154" width="1" height="3" fill="#000" />
<rect x="110" y="163" width="1" height="3" fill="#000" />
<rect x="110" y="323" width="1" height="4" fill="#000" />
<rect x="110" y="328" width="1" height="4" fill="#000" />
<rect x="110" y="489" width="1" height="3" fill="#000" />
<rect x="110" y="494" width="1" height="3" fill="#000" />
<rect x="110" y="529" width="1" height="3" fill="#000" />
<rect x="121" y="127" width="1" height="3" fill="#000" />
<rect x="121" y="154" width="1" height="3" fill="#000" />
<rect x="121" y="163" width="1" height="3" fill="#000" />
<rect x="121" y="323" width="1" height="4" fill="#000" />
<rect x="121" y="328" width="1" height="4" fill="#000" />
<rect x="121" y="489" width="1" height="3" fill="#000" />
<rect x="121" y="494" width="1" height="3" fill="#000" />
<rect x="121" y="529" width="1" height="3" fill="#000" />
<rect x="131" y="127" width="1" height="3" fill="#000" />
<rect x="131" y="154" width="1" height="3" fill="#000" />
<rect x="131" y="163" width="1" height="3" fill="#000" />
<rect x="131" y="323" width="1" height="4" fill="#000" />
<rect x="131" y="328" width="1" height="4" fill="#000" />
<rect x="131" y="489" width="1" height="3" fill="#000" />
<rect x="131" y="494" width="1" height="3" fill="#000" />
<rect x="131" y="529" width="1" height="3" fill="#000" />
<rect x="141" y="126" width="1" height="11" fill="#000" />
<rect x="141" y="147" width="1" height="10" fill="#000" />
<rect x="141" y="157" width="1" height="9" fill="#000" />
<rect x="141" y="322" width="1" height="10" fill="#000" />
<rect x="141" y="488" width="1" height="9" fill="#000" />
<rect x="141" y="528" width="1" height="11" fill="#000" />
<rect x="152" y="127" width="1" height="3" fill="#000" />
<rect x="152" y="154" width="1" height="3" fill="#000" />
<rect x="152" y="163" width="1" height="3" fill="#000" />
<rect x="152" y="323" width="1" height="4" fill="#000" />
<rect x="152" y="328" width="1" height="4" fill="#000" />
<rect x="152" y="489" width="1" height="3" fill="#000" />
<rect x="152" y="494" width="1" height="3" fill="#000" />
<rect x="152" y="529" width="1" height="3" fill="#000" />
<rect x="162" y="127" width="1" height="3" fill="#000" />
<rect x="162" y="154" width="1" height="3" fill="#000" />
<rect x="162" y="163" width="1" height="3" fill="#000" />
<rect x="162" y="323" width="1" height="4" fill="#000" />
<rect x="162" y="328" width="1" height="4" fill="#000" />
<rect x="162" y="489" width="1" height="3" fill="#000" />
<rect x="162" y="494" width="1" height="3" fill="#000" />
<rect x="162" y="529" width="1" height="3" fill="#000" />
<rect x="173" y="127" width="1" height="3" fill="#000" />
<rect x="173" y="154" width="1" height="3" fill="#000" />
<rect x="173" y="163" width="1" height="3" fill="#000" />
<rect x="173" y="323" width="1" height="4" fill="#000" />
<rect x="173" y="328" width="1" height="4" fill="#000" />
<rect x="173" y="489" width="1" height="3" fill="#000" />
<rect x="173" y="494" width="1" height="3" fill="#000" />
<rect x="173" y="529" width="1" height="3" fill="#000" />
<rect x="183" y="127" width="1" height="3" fill="#000" />
<rect x="183" y="154" width="1" height="3" fill="#000" />
<rect x="183" y="163" width="1" height="3" fill="#000" />
<rect x="183" y="323" width="1" height="4" fill="#000" />
<rect x="183" y="328" width="1" height="4" fill="#000" />
<rect x="183" y="489" width="1" height="3" fill="#000" />
<rect x="183" y="494" width="1" height="3" fill="#000" />
<rect x="183" y="529" width="1" height="3" fill="#000" />
<rect x="193" y="127" width="1" height="3" fill="#000" />
<rect x="193" y="154" width="1" height="3" fill="#000" />
<rect x="193" y="163" width="1" height="3" fill="#000" />
<rect x="193" y="323" width="1" height="4" fill="#000" />
<rect x="193" y="328" width="1" height="4" fill="#000" />
<rect x="193" y="489" width="1" height="3" fill="#000" />
<rect x="193" y="494" width="1" height="3" fill="#000" />
<rect x="193" y="529" width="1" height="3" fill="#000" />
<rect x="204" y="126" width="1" height="11" fill="#000" />
<rect x="204" y="147" width="1" height="10" fill="#000" />
<rect x="204" y="157" width="1" height="9" fill="#000" />
<rect x="204" y="322" width="1" height="10" fill="#000" />
<rect x="204" y="488" width="1" height="9" fill="#000" />
<rect x="204" y="528" width="1" height="11" fill="#000" />
<rect x="214" y="127" width="1" height="3" fill="#000" />
<rect x="214" y="154" width="1" height="3" fill="#000" />
<rect x="214" y="163" width="1" height="3" fill="#000" />
<rect x="214" y="323" width="1" height="4" fill="#000" />
<rect x="214" y="328" width="1" height="4" fill="#000" />
<rect x="214" y="489" width="1" height="3" fill="#000" />
<rect x="214" y="494" width="1" height="3" fill="#000" />
<rect x="214" y="529" width="1" height="3" fill="#000" />
<rect x="224" y="127" width="1" height="3" fill="#000" />
<rect x="224" y="154" width="1" height="3" fill="#000" />
<rect x="224" y="163" width="1" height="3" fill="#000" />
<rect x="224" y="323" width="1" height="4" fill="#000" />
<rect x="224" y="328" width="1" height="4" fill="#000" />
<rect x="224" y="489" width="1" height="3" fill="#000" />
<rect x="224" y="494" width="1" height="3" fill="#000" />
<rect x="224" y="529" width="1" height="3" fill="#000" />
<rect x="235" y="127" width="1" height="3" fill="#000" />
<rect x="235" y="154" width="1" height="3" fill="#000" />
<rect x="235" y="163" width="1" height="3" fill="#000" />
<rect x="235" y="323" width="1" height="4" fill="#000" />
<rect x="235" y="328" width="1" height="4" fill="#000" />
<rect x="235" y="489" width="1" height="3" fill="#000" />
<rect x="235" y="494" width="1" height="3" fill="#000" />
<rect x="235" y="529" width="1" height="3" fill="#000" />
<rect x="245" y="127" width="1" height="3" fill="#000" />
<rect x="245" y="154" width="1" height="3" fill="#000" />
<rect x="245" y="163" width="1" height="3" fill="#000" />
<rect x="245" y="323" width="1" height="4" fill="#000" />
<rect x="245" y="328" width="1" height="4" fill="#000" />
<rect x="245" y="489" width="1" height="3" fill="#000" />
<rect x="245" y="494" width="1" height="3" fill="#000" />
<rect x="245" y="529" width="1" height="3" fill="#000" />
<rect x="256" y="127" width="1" height="3" fill="#000" />
<rect x="256" y="154" width="1" height="3" fill="#000" />
<rect x="256" y="163" width="1" height="3" fill="#000" />
<rect x="256" y="323" width="1" height="4" fill="#000" />
<rect x="256" y="328" width="1" height="4" fill="#000" />
<rect x="256" y="489" width="1" height="3" fill="#000" />
<rect x="256" y="494" width="1" height="3" fill="#000" />
<rect x="256" y="529" width="1" height="3" fill="#000" />
<rect x="266" y="126" width="1" height="11" fill="#000" />
<rect x="266" y="147" width="1" height="10" fill="#000" />
<rect x="266" y="157" width="1" height="9" fill="#000" />
<rect x="266" y="322" width="1" height="10" fill="#000" />
<rect x="266" y="488" width="1" height="9" fill="#000" />
<rect x="266" y="528" width="1" height="11" fill="#000" />
<rect x="276" y="127" width="1" height="3" fill="#000" />
<rect x="276" y="154" width="1" height="3" fill="#000" />
<rect x="276" y="163" width="1" height="3" fill="#000" />
<rect x="276" y="323" width="1" height="4" fill="#000" />
<rect x="276" y="328" width="1" height="4" fill="#000" />
<rect x="276" y="489" width="1" height="3" fill="#000" />
<rect x="276" y="494" width="1" height="3" fill="#000" />
<rect x="276" y="529" width="1" height="3" fill="#000" />
<rect x="287" y="127" width="1" height="3" fill="#000" />
<rect x="287" y="154" width="1" height="3" fill="#000" />
<rect x="287" y="163" width="1" height="3" fill="#000" />
<rect x="287" y="323" width="1" height="4" fill="#000" />
<rect x="287" y="328" width="1" height="4" fill="#000" />
<rect x="287" y="489" width="1" height="3" fill="#000" />
<rect x="287" y="494" width="1" height="3" fill="#000" />
<rect x="287" y="529" width="1" height="3" fill="#000" />
<rect x="297" y="127" width="1" height="3" fill="#000" />
<rect x="297" y="154" width="1" height="3" fill="#000" />
<rect x="297" y="163" width="1" height="3" fill="#000" />
<rect x="297" y="323" width="1" height="4" fill="#000" />
<rect x="297" y="328" width="1" height="4" fill="#000" />
<rect x="297" y="489" width="1" height="3" fill="#000" />
<rect x="297" y="494" width="1" height="3" fill="#000" />
<rect x="297" y="529" width="1" height="3" fill="#000" />
<rect x="308" y="127" width="1" height="3" fill="#000" />
<rect x="308" y="154" width="1" height="3" fill="#000" />
<rect x="308" y="163" width="1" height="3" fill="#000" />
<rect x="308" y="323" width="1" height="4" fill="#000" />
<rect x="308" y="328" width="1" height="4" fill="#000" />
<rect x="308" y="489" width="1" height="3" fill="#000" />
<rect x="308" y="494" width="1" height="3" fill="#000" />
<rect x="308" y="529" width="1" height="3" fill="#000" />
<rect x="318" y="127" width="1" height="3" fill="#000" />
<rect x="318" y="154" width="1" height="3" fill="#000" />
<rect x="318" y="163" width="1" height="3" fill="#000" />
<rect x="318" y="323" width="1" height="4" fill="#000" />
<rect x="318" y="328" width="1" height="4" fill="#000" />
<rect x="318" y="489" width="1" height="3" fill="#000" />
<rect x="318" y="494" width="1" height="3" fill="#000" />
<rect x="318" y="529" width="1" height="3" fill="#000" />
<rect x="328" y="126" width="1" height="11" fill="#000" />
<rect x="328" y="147" width="1" height="10" fill="#000" />
<rect x="328" y="157" width="1" height="9" fill="#000" />
<rect x="328" y="322" width="1" height="10" fill="#000" />
<rect x="328" y="488" width="1" height="9" fill="#000" />
<rect x="328" y="528" width="1" height="11" fill="#000" />
<rect x="339" y="127" width="1" height="3" fill="#000" />
<rect x="339" y="154" width="1" height="3" fill="#000" />
<rect x="339" y="163" width="1" height="3" fill="#000" />
<rect x="339" y="323" width="1" height="4" fill="#000" />
<rect x="339" y="328" width="1" height="4" fill="#000" />
<rect x="339" y="489" width="1" height="3" fill="#000" />
<rect x="339" y="494" width="1" height="3" fill="#000" />
<rect x="339" y="529" width="1" height="3" fill="#000" />
<rect x="349" y="127" width="1" height="3" fill="#000" />
<rect x="349" y="154" width="1" height="3" fill="#000" />
<rect x="349" y="163" width="1" height="3" fill="#000" />
<rect x="349" y="323" width="1" height="4" fill="#000" />
<rect x="349" y="328" width="1" height="4" fill="#000" />
<rect x="349" y="489" width="1" height="3" fill="#000" />
<rect x="349" y="494" width="1" height="3" fill="#000" />
<rect x="349" y="529" width="1" height="3" fill="#000" />
<rect x="360" y="127" width="1" height="3" fill="#000" />
<rect x="360" y="154" width="1" height="3" fill="#000" />
<rect x="360" y="163" width="1" height="3" fill="#000" />
<rect x="360" y="323" width="1" height="4" fill="#000" />
<rect x="360" y="328" width="1" height="4" fill="#000" />
<rect x="360" y="489" width="1" height="3" fill="#000" />
<rect x="360" y="494" width="1" height="3" fill="#000" />
<rect x="360" y="529" width="1" height="3" fill="#000" />
<rect x="370" y="127" width="1" height="3" fill="#000" />
<rect x="370" y="154" width="1" height="3" fill="#000" />
<rect x="370" y="163" width="1" height="3" fill="#000" />
<rect x="370" y="323" width="1" height="4" fill="#000" />
<rect x="370" y="328" width="1" height="4" fill="#000" />
<rect x="370" y="489" width="1" height="3" fill="#000" />
<rect x="370" y="494" width="1" height="3" fill="#000" />
<rect x="370" y="529" width="1" height="3" fill="#000" />
<rect x="380" y="127" width="1" height="3" fill="#000" />
<rect x="380" y="154" width="1" height="3" fill="#000" />
<rect x="380" y="163" width="1" height="3" fill="#000" />
<rect x="380" y="323" width="1" height="4" fill="#000" />
<rect x="380" y="328" width="1" height="4" fill="#000" />
<rect x="380" y="489" width="1" height="3" fill="#000" />
<rect x="380" y="494" width="1" height="3" fill="#000" />
<rect x="380" y="529" width="1" height="3" fill="#000" />
<rect x="391" y="126" width="1" height="11" fill="#000" />
<rect x="391" y="147" width="1" height="10" fill="#000" />
<rect x="391" y="157" width="1" height="9" fill="#000" />
<rect x="391" y="322" width="1" height="10" fill="#000" />
<rect x="391" y="488" width="1" height="9" fill="#000" />
<rect x="391" y="528" width="1" height="11" fill="#000" />
<rect x="401" y="127" width="1" height="3" fill="#000" />
<rect x="401" y="154" width="1" height="3" fill="#000" />
<rect x="401" y="163" width="1" height="3" fill="#000" />
<rect x="401" y="323" width="1" height="4" fill="#000" />
<rect x="401" y="328" width="1" height="4" fill="#000" />
<rect x="401" y="489" width="1" height="3" fill="#000" />
<rect x="401" y="494" width="1" height="3" fill="#000" />
<rect x="401" y="529" width="1" height="3" fill="#000" />
<rect x="411" y="127" width="1" height="3" fill="#000" />
<rect x="411" y="154" width="1" height="3" fill="#000" />
<rect x="411" y="163" width="1" height="3" fill="#000" />
<rect x="411" y="323" width="1" height="4" fill="#000" />
<rect x="411" y="328" width="1" height="4" fill="#000" />
<rect x="411" y="489" width="1" height="3" fill="#000" />
<rect x="411" y="494" width="1" height="3" fill="#000" />
<rect x="411" y="529" width="1" height="3" fill="#000" />
<rect x="422" y="127" width="1" height="3" fill="#000" />
<rect x="422" y="154" width="1" height="3" fill="#000" />
<rect x="422" y="163" width="1" height="3" fill="#000" />
<rect x="422" y="323" width="1" height="4" fill="#000" />
<rect x="422" y="328" width="1" height="4" fill="#000" />
<rect x="422" y="489" width="1" height="3" fill="#000" />
<rect x="422" y="494" width="1" height="3" fill="#000" />
<rect x="422" y="529" width="1" height="3" fill="#000" />
<rect x="432" y="127" width="1" height="3" fill="#000" />
<rect x="432" y="154" width="1" height="3" fill="#000" />
<rect x="432" y="163" width="1" height="3" fill="#000" />
<rect x="432" y="323" width="1" height="4" fill="#000" />
<rect x="432" y="328" width="1" height="4" fill="#000" />
<rect x="432" y="489" width="1" height="3" fill="#000" />
<rect x="432" y="494" width="1" height="3" fill="#000" />
<rect x="432" y="529" width="1" height="3" fill="#000" />
<rect x="443" y="127" width="1" height="3" fill="#000" />
<rect x="443" y="154" width="1" height="3" fill="#000" />
<rect x="443" y="163" width="1" height="3" fill="#000" />
<rect x="443" y="323" width="1" height="4" fill="#000" />
<rect x="443" y="328" width="1" height="4" fill="#000" />
<rect x="443" y="489" width="1" height="3" fill="#000" />
<rect x="443" y="494" width="1" height="3" fill="#000" />
<rect x="443" y="529" width="1" height="3" fill="#000" />
<rect x="453" y="126" width="1" height="11" fill="#000" />
<rect x="453" y="147" width="1" height="10" fill="#000" />
<rect x="453" y="157" width="1" height="9" fill="#000" />
<rect x="453" y="322" width="1" height="10" fill="#000" />
<rect x="453" y="488" width="1" height="9" fill="#000" />
<rect x="453" y="528" width="1" height="11" fill="#000" />
<rect x="463" y="127" width="1" height="3" fill="#000" />
<rect x="463" y="154" width="1" height="3" fill="#000" />
<rect x="463" y="163" width="1" height="3" fill="#000" />
<rect x="463" y="323" width="1" height="4" fill="#000" />
<rect x="463" y="328" width="1" height="4" fill="#000" />
<rect x="463" y="489" width="1" height="3" fill="#000" />
<rect x="463" y="494" width="1" height="3" fill="#000" />
<rect x="463" y="529" width="1" height="3" fill="#000" />
<rect x="474" y="127" width="1" height="3" fill="#000" />
<rect x="474" y="154" width="1" height="3" fill="#000" />
<rect x="474" y="163" width="1" height="3" fill="#000" />
<rect x="474" y="323" width="1" height="4" fill="#000" />
<rect x="474" y="328" width="1" height="4" fill="#000" />
<rect x="474" y="489" width="1" height="3" fill="#000" />
<rect x="474" y="494" width="1" height="3" fill="#000" />
<rect x="474" y="529" width="1" height="3" fill="#000" />
<rect x="484" y="127" width="1" height="3" fill="#000" />
<rect x="484" y="154" width="1" height="3" fill="#000" />
<rect x="484" y="163" width="1" height="3" fill="#000" />
<rect x="484" y="323" width="1" height="4" fill="#000" />
<rect x="484" y="328" width="1" height="4" fill="#000" />
<rect x="484" y="489" width="1" height="3" fill="#000" />
<rect x="484" y="494" width="1" height="3" fill="#000" />
<rect x="484" y="529" width="1" height="3" fill="#000" />
<rect x="495" y="127" width="1" height="3" fill="#000" />
<rect x="495" y="154" width="1" height="3" fill="#000" />
<rect x="495" y="163" width="1" height="3" fill="#000" />
<rect x="495" y="323" width="1" height="4" fill="#000" />
<rect x="495" y="328" width="1" height="4" fill="#000" />
<rect x="495" y="489" width="1" height="3" fill="#000" />
<rect x="495" y="494" width="1" height="3" fill="#000" />
<rect x="495" y="529" width="1" height="3" fill="#000" />
<rect x="505" y="127" width="1" height="3" fill="#000" />
<rect x="505" y="154" width="1" height="3" fill="#000" />
<rect x="505" y="163" width="1" height="3" fill="#000" />
<rect x="505" y="323" width="1" height="4" fill="#000" />
<rect x="505" y="328" width="1" height="4" fill="#000" />
<rect x="505" y="489" width="1" height="3" fill="#000" />
<rect x="505" y="494" width="1" height="3" fill="#000" />
<rect x="505" y="529" width="1" height="3" fill="#000" />
<rect x="515" y="126" width="1" height="11" fill="#000" />
<rect x="515" y="147" width="1" height="10" fill="#000" />
<rect x="515" y="157" width="1" height="9" fill="#000" />
<rect x="515" y="322" width="1" height="10" fill="#000" />
<rect x="515" y="488" width="1" height="9" fill="#000" />
<rect x="515" y="528" width="1" height="11" fill="#000" />
<rect x="526" y="127" width="1" height="3" fill="#000" />
<rect x="526" y="154" width="1" height="3" fill="#000" />
<rect x="526" y="163" width="1" height="3" fill="#000" />
<rect x="526" y="323" width="1" height="4" fill="#000" />
<rect x="526" y="328" width="1" height="4" fill="#000" />
<rect x="526" y="489" width="1" height="3" fill="#000" />
<rect x="526" y="494" width="1" height="3" fill="#000" />
<rect x="526" y="529" width="1" height="3" fill="#000" />
<rect x="536" y="127" width="1" height="3" fill="#000" />
<rect x="536" y="154" width="1" height="3" fill="#000" />
<rect x="536" y="163" width="1" height="3" fill="#000" />
<rect x="536" y="323" width="1" height="4" fill="#000" />
<rect x="536" y="328" width="1" height="4" fill="#000" />
<rect x="536" y="489" width="1" height="3" fill="#000" />
<rect x="536" y="494" width="1" height="3" fill="#000" />
<rect x="536" y="529" width="1" height="3" fill="#000" />
<rect x="547" y="127" width="1" height="3" fill="#000" />
<rect x="547" y="154" width="1" height="3" fill="#000" />
<rect x="547" y="163" width="1" height="3" fill="#000" />
<rect x="547" y="323" width="1" height="4" fill="#000" />
<rect x="547" y="328" width="1" height="4" fill="#000" />
<rect x="547" y="489" width="1" height="3" fill="#000" />
<rect x="547" y="494" width="1" height="3" fill="#000" />
<rect x="547" y="529" width="1" height="3" fill="#000" />
<rect x="557" y="127" width="1" height="3" fill="#000" />
<rect x="557" y="154" width="1" height="3" fill="#000" />
<rect x="557" y="163" width="1" height="3" fill="#000" />
<rect x="557" y="323" width="1" height="4" fill="#000" />
<rect x="557" y="328" width="1" height="4" fill="#000" />
<rect x="557" y="489" width="1" height="3" fill="#000" />
<rect x="557" y="494" width="1" height="3" fill="#000" />
<rect x="557" y="529" width="1" height="3" fill="#000" />
<rect x="567" y="127" width="1" height="3" fill="#000" />
<rect x="567" y="154" width="1" height="3" fill="#000" />
<rect x="567" y="163" width="1" height="3" fill="#000" />
<rect x="567" y="323" width="1" height="4" fill="#000" />
<rect x="567" y="328" width="1" height="4" fill="#000" />
<rect x="567" y="489" width="1" height="3" fill="#000" />
<rect x="567" y="494" width="1" height="3" fill="#000" />
<rect x="567" y="529" width="1" height="3" fill="#000" />
<rect x="578" y="126" width="1" height="11" fill="#000" />
<rect x="578" y="147" width="1" height="10" fill="#000" />
<rect x="578" y="157" width="1" height="9" fill="#000" />
<rect x="578" y="322" width="1" height="10" fill="#000" />
<rect x="578" y="488" width="1" height="9" fill="#000" />
<rect x="578" y="528" width="1" height="11" fill="#000" />
<rect x="588" y="127" width="1" height="3" fill="#000" />
<rect x="588" y="154" width="1" height="3" fill="#000" />
<rect x="588" y="163" width="1" height="3" fill="#000" />
<rect x="588" y="323" width="1" height="4" fill="#000" />
<rect x="588" y="328" width="1" height="4" fill="#000" />
<rect x="588" y="489" width="1" height="3" fill="#000" />
<rect x="588" y="494" width="1" height="3" fill="#000" />
<rect x="588" y="529" width="1" height="3" fill="#000" />
<rect x="599" y="127" width="1" height="3" fill="#000" />
<rect x="599" y="154" width="1" height="3" fill="#000" />
<rect x="599" y="163" width="1" height="3" fill="#000" />
<rect x="599" y="323" width="1" height="4" fill="#000" />
<rect x="599" y="328" width="1" height="4" fill="#000" />
<rect x="599" y="489" width="1" height="3" fill="#000" />
<rect x="599" y="494" width="1" height="3" fill="#000" />
<rect x="599" y="529" width="1" height="3" fill="#000" />
<rect x="609" y="127" width="1" height="3" fill="#000" />
<rect x="609" y="154" width="1" height="3" fill="#000" />
<rect x="609" y="163" width="1" height="3" fill="#000" />
<rect x="609" y="323" width="1" height="4" fill="#000" />
<rect x="609" y="328" width="1" height="4" fill="#000" />
<rect x="609" y="489" width="1" height="3" fill="#000" />
<rect x="609" y="494" width="1" height="3" fill="#000" />
<rect x="609" y="529" width="1" height="3" fill="#000" />
<rect x="619" y="127" width="1" height="3" fill="#000" />
<rect x="619" y="154" width="1" height="3" fill="#000" />
<rect x="619" y="163" width="1" height="3" fill="#000" />
<rect x="619" y="323" width="1" height="4" fill="#000" />
<rect x="619" y="328" width="1" height="4" fill="#000" />
<rect x="619" y="489" width="1" height="3" fill="#000" />
<rect x="619" y="494" width="1" height="3" fill="#000" />
<rect x="619" y="529" width="1" height="3" fill="#000" />
<rect x="630" y="127" width="1" height="3" fill="#000" />
<rect x="630" y="154" width="1" height="3" fill="#000" />
<rect x="630" y="163" width="1" height="3" fill="#000" />
<rect x="630" y="323" width="1" height="4" fill="#000" />
<rect x="630" y="328" width="1" height="4" fill="#000" />
<rect x="630" y="489" width="1" height="3" fill="#000" />
<rect x="630" y="494" width="1" height="3" fill="#000" />
<rect x="630" y="529" width="1" height="3" fill="#000" />
<rect x="640" y="126" width="1" height="11" fill="#000" />
<rect x="640" y="147" width="1" height="10" fill="#000" />
<rect x="640" y="157" width="1" height="9" fill="#000" />
<rect x="640" y="322" width="1" height="10" fill="#000" />
<rect x="640" y="488" width="1" height="9" fill="#000" />
<rect x="640" y="528" width="1" height="11" fill="#000" />
<rect x="650" y="127" width="1" height="3" fill="#000" />
<rect x="650" y="154" width="1" height="3" fill="#000" />
<rect x="650" y="163" width="1" height="3" fill="#000" />
<rect x="650" y="323" width="1" height="4" fill="#000" />
<rect x="650" y="328" width="1" height="4" fill="#000" />
<rect x="650" y="489" width="1" height="3" fill="#000" />
<rect x="650" y="494" width="1" height="3" fill="#000" />
<rect x="650" y="529" width="1" height="3" fill="#000" />
<rect x="661" y="127" width="1" height="3" fill="#000" />
<rect x="661" y="154" width="1" height="3" fill="#000" />
<rect x="661" y="163" width="1" height="3" fill="#000" />
<rect x="661" y="323" width="1" height="4" fill="#000" />
<rect x="661" y="328" width="1" height="4" fill="#000" />
<rect x="661" y="489" width="1" height="3" fill="#000" />
<rect x="661" y="494" width="1" height="3" fill="#000" />
<rect x="661" y="529" width="1" height="3" fill="#000" />
<rect x="671" y="127" width="1" height="3" fill="#000" />
<rect x="671" y="154" width="1" height="3" fill="#000" />
<rect x="671" y="163" width="1" height="3" fill="#000" />
<rect x="671" y="323" width="1" height="4" fill="#000" />
<rect x="671" y="328" width="1" height="4" fill="#000" />
<rect x="671" y="489" width="1" height="3" fill="#000" />
<rect x="671" y="494" width="1" height="3" fill="#000" />
<rect x="671" y="529" width="1" height="3" fill="#000" />
<rect x="682" y="127" width="1" height="3" fill="#000" />
<rect x="682" y="154" width="1" height="3" fill="#000" />
<rect x="682" y="163" width="1" height="3" fill="#000" />
<rect x="682" y="323" width="1" height="4" fill="#000" />
<rect x="682" y="328" width="1" height="4" fill="#000" />
<rect x="682" y="489" width="1" height="3" fill="#000" />
<rect x="682" y="494" width="1" height="3" fill="#000" />
<rect x="682" y="529" width="1" height="3" fill="#000" />
<rect x="692" y="127" width="1" height="3" fill="#000" />
<rect x="692" y="154" width="1" height="3" fill="#000" />
<rect x="692" y="163" width="1" height="3" fill="#000" />
<rect x="692" y="323" width="1" height="4" fill="#000" />
<rect x="692" y="328" width="1" height="4" fill="#000" />
<rect x="692" y="489" width="1" height="3" fill="#000" />
<rect x="692" y="494" width="1" height="3" fill="#000" />
<rect x="692" y="529" width="1" height="3" fill="#000" />
<rect x="703" y="126" width="1" height="11" fill="#000" />
<rect x="703" y="147" width="1" height="10" fill="#000" />
<rect x="703" y="157" width="1" height="9" fill="#000" />
<rect x="703" y="322" width="1" height="10" fill="#000" />
<rect x="703" y="488" width="1" height="9" fill="#000" />
<rect x="703" y="528" width="1" height="11" fill="#000" />
<rect x="80" y="141" width="613" height="2" fill="#000" />
<rect x="225" y="140" width="2" height="1" fill="#000" />
<rect x="370" y="143" width="1" height="1" fill="#000" />
<rect x="238" y="140" width="2" height="1" fill="#000" />
<rect x="367" y="139" width="1" height="2" fill="#000" />
<rect x="222" y="143" width="2" height="1" fill="#000" />
<rect x="318" y="143" width="1" height="1" fill="#000" />
<rect x="177" y="140" width="1" height="1" fill="#000" />
<rect x="583" y="140" width="2" height="1" fill="#000" />
<rect x="642" y="143" width="1" height="2" fill="#000" />
<rect x="321" y="143" width="1" height="2" fill="#000" />
<rect x="617" y="140" width="1" height="1" fill="#000" />
<rect x="213" y="143" width="1" height="2" fill="#000" />
<rect x="337" y="143" width="2" height="2" fill="#000" />
<rect x="437" y="143" width="2" height="1" fill="#000" />
<rect x="640" y="143" width="2" height="1" fill="#000" />
<rect x="490" y="143" width="1" height="1" fill="#000" />
<rect x="669" y="143" width="1" height="1" fill="#000" />
<rect x="467" y="140" width="1" height="1" fill="#000" />
<rect x="375" y="139" width="1" height="2" fill="#000" />
<rect x="331" y="140" width="1" height="1" fill="#000" />
<rect x="550" y="140" width="2" height="1" fill="#000" />
<rect x="545" y="143" width="1" height="2" fill="#000" />
<rect x="417" y="143" width="1" height="1" fill="#000" />
<rect x="269" y="140" width="2" height="1" fill="#000" />
<rect x="99" y="143" width="1" height="1" fill="#000" />
<rect x="453" y="143" width="1" height="1" fill="#000" />
<rect x="272" y="143" width="1" height="1" fill="#000" />
<rect x="310" y="143" width="2" height="2" fill="#000" />
<rect x="496" y="143" width="2" height="1" fill="#000" />
<rect x="246" y="143" width="1" height="1" fill="#000" />
<rect x="677" y="143" width="1" height="1" fill="#000" />
<rect x="562" y="140" width="2" height="1" fill="#000" />
<rect x="440" y="140" width="2" height="1" fill="#000" />
<rect x="283" y="143" width="1" height="1" fill="#000" />
<rect x="452" y="143" width="1" height="1" fill="#000" />
<rect x="440" y="143" width="1" height="1" fill="#000" />
<rect x="464" y="143" width="1" height="1" fill="#000" />
<rect x="188" y="140" width="1" height="1" fill="#000" />
<rect x="596" y="140" width="1" height="1" fill="#000" />
<rect x="144" y="143" width="2" height="1" fill="#000" />
<rect x="529" y="143" width="2" height="1" fill="#000" />
<rect x="571" y="140" width="2" height="1" fill="#000" />
<rect x="346" y="140" width="1" height="1" fill="#000" />
<rect x="660" y="140" width="1" height="1" fill="#000" />
<rect x="129" y="143" width="1" height="1" fill="#000" />
<rect x="245" y="140" width="1" height="1" fill="#000" />
<rect x="273" y="143" width="1" height="1" fill="#000" />
<rect x="573" y="143" width="1" height="1" fill="#000" />
<rect x="440" y="139" width="1" height="2" fill="#000" />
<rect x="364" y="139" width="2" height="2" fill="#000" />
<rect x="330" y="139" width="1" height="2" fill="#000" />
<rect x="372" y="143" width="2" height="2" fill="#000" />
<rect x="216" y="143" width="2" height="2" fill="#000" />
<rect x="537" y="143" width="1" height="1" fill="#000" />
<rect x="606" y="140" width="1" height="1" fill="#000" />
<rect x="108" y="143" width="1" height="1" fill="#000" />
<rect x="433" y="140" width="1" height="1" fill="#000" />
<rect x="185" y="140" width="1" height="1" fill="#000" />
<rect x="401" y="139" width="2" height="2" fill="#000" />
<rect x="149" y="140" width="2" height="1" fill="#000" />
<rect x="372" y="140" width="1" height="1" fill="#000" />
<rect x="155" y="140" width="1" height="1" fill="#000" />
<rect x="643" y="143" width="1" height="1" fill="#000" />
<rect x="378" y="139" width="1" height="2" fill="#000" />
<rect x="232" y="139" width="1" height="2" fill="#000" />
<rect x="554" y="143" width="1" height="1" fill="#000" />
<rect x="108" y="140" width="1" height="1" fill="#000" />
<rect x="602" y="143" width="1" height="1" fill="#000" />
<rect x="273" y="140" width="1" height="1" fill="#000" />
<rect x="475" y="140" width="1" height="1" fill="#000" />
<rect x="684" y="139" width="2" height="2" fill="#000" />
<rect x="82" y="143" width="2" height="2" fill="#000" />
<rect x="189" y="140" width="2" height="1" fill="#000" />
<rect x="558" y="143" width="1" height="2" fill="#000" />
<rect x="461" y="139" width="2" height="2" fill="#000" />
<rect x="383" y="140" width="2" height="1" fill="#000" />
<rect x="336" y="140" width="2" height="1" fill="#000" />
<rect x="245" y="143" width="1" height="1" fill="#000" />
<rect x="340" y="143" width="1" height="1" fill="#000" />
<rect x="672" y="140" width="2" height="1" fill="#000" />
<rect x="155" y="143" width="2" height="2" fill="#000" />
<rect x="275" y="143" width="2" height="1" fill="#000" />
<rect x="83" y="140" width="1" height="1" fill="#000" />
<rect x="107" y="143" width="2" height="1" fill="#000" />
<rect x="618" y="143" width="1" height="1" fill="#000" />
<rect x="594" y="140" width="1" height="1" fill="#000" />
<rect x="492" y="143" width="1" height="1" fill="#000" />
<rect x="102" y="140" width="2" height="1" fill="#000" />
<rect x="141" y="143" width="2" height="1" fill="#000" />
<rect x="190" y="140" width="1" height="1" fill="#000" />
<rect x="475" y="143" width="1" height="2" fill="#000" />
<rect x="235" y="143" width="2" height="2" fill="#000" />
<rect x="336" y="140" width="1" height="1" fill="#000" />
<rect x="675" y="143" width="1" height="2" fill="#000" />
<rect x="334" y="139" width="1" height="2" fill="#000" />
<rect x="628" y="140" width="1" height="1" fill="#000" />
<rect x="537" y="143" width="1" height="2" fill="#000" />
<rect x="163" y="140" width="2" height="1" fill="#000" />
<rect x="272" y="143" width="2" height="1" fill="#000" />
<rect x="663" y="143" width="1" height="1" fill="#000" />
<rect x="444" y="143" width="1" height="1" fill="#000" />
<rect x="94" y="143" width="1" height="2" fill="#000" />
<rect x="185" y="140" width="1" height="1" fill="#000" />
<rect x="553" y="140" width="2" height="1" fill="#000" />
<rect x="373" y="140" width="2" height="1" fill="#000" />
<rect x="420" y="143" width="1" height="2" fill="#000" />
<rect x="603" y="143" width="1" height="2" fill="#000" />
<rect x="366" y="143" width="2" height="1" fill="#000" />
<rect x="519" y="143" width="1" height="1" fill="#000" />
<rect x="228" y="143" width="1" height="1" fill="#000" />
<rect x="194" y="143" width="1" height="1" fill="#000" />
<rect x="184" y="140" width="1" height="1" fill="#000" />
<rect x="136" y="140" width="1" height="1" fill="#000" />
<rect x="590" y="140" width="1" height="1" fill="#000" />
<rect x="435" y="140" width="1" height="1" fill="#000" />
<rect x="283" y="139" width="1" height="2" fill="#000" />
<rect x="474" y="139" width="2" height="2" fill="#000" />
<rect x="275" y="140" width="1" height="1" fill="#000" />
<rect x="149" y="140" width="2" height="1" fill="#000" />
<rect x="309" y="143" width="1" height="1" fill="#000" />
<rect x="485" y="140" width="1" height="1" fill="#000" />
<rect x="491" y="143" width="2" height="1" fill="#000" />
<rect x="295" y="143" width="2" height="1" fill="#000" />
<rect x="534" y="140" width="2" height="1" fill="#000" />
<rect x="358" y="143" width="1" height="1" fill="#000" />
<rect x="643" y="143" width="2" height="2" fill="#000" />
<rect x="194" y="139" width="1" height="2" fill="#000" />
<rect x="511" y="143" width="2" height="1" fill="#000" />
<rect x="412" y="139" width="1" height="2" fill="#000" />
<rect x="245" y="143" width="1" height="1" fill="#000" />
<rect x="372" y="140" width="2" height="1" fill="#000" />
<rect x="296" y="143" width="1" height="1" fill="#000" />
<rect x="411" y="140" width="1" height="1" fill="#000" />
<rect x="173" y="143" width="2" height="1" fill="#000" />
<rect x="556" y="140" width="1" height="1" fill="#000" />
<rect x="426" y="143" width="2" height="2" fill="#000" />
<rect x="158" y="143" width="1" height="1" fill="#000" />
<rect x="413" y="143" width="1" height="1" fill="#000" />
<rect x="611" y="143" width="1" height="1" fill="#000" />
<rect x="595" y="143" width="1" height="2" fill="#000" />
<rect x="273" y="143" width="2" height="1" fill="#000" />
<rect x="500" y="143" width="2" height="1" fill="#000" />
<rect x="376" y="143" width="1" height="1" fill="#000" />
<rect x="146" y="140" width="2" height="1" fill="#000" />
<rect x="462" y="140" width="2" height="1" fill="#000" />
<rect x="209" y="139" width="1" height="2" fill="#000" />
<rect x="666" y="140" width="1" height="1" fill="#000" />
<rect x="461" y="140" width="2" height="1" fill="#000" />
<rect x="223" y="140" width="1" height="1" fill="#000" />
<rect x="648" y="140" width="1" height="1" fill="#000" />
<rect x="504" y="140" width="2" height="1" fill="#000" />
<rect x="554" y="143" width="2" height="1" fill="#000" />
<rect x="687" y="143" width="1" height="1" fill="#000" />
<rect x="347" y="140" width="1" height="1" fill="#000" />
<rect x="561" y="139" width="1" height="2" fill="#000" />
<rect x="511" y="139" width="2" height="2" fill="#000" />
<rect x="122" y="139" width="1" height="2" fill="#000" />
<rect x="266" y="139" width="2" height="2" fill="#000" />
<rect x="325" y="140" width="1" height="1" fill="#000" />
<rect x="520" y="143" width="1" height="1" fill="#000" />
<rect x="403" y="139" width="1" height="2" fill="#000" />
<rect x="571" y="143" width="1" height="1" fill="#000" />
<rect x="603" y="140" width="1" height="1" fill="#000" />
<rect x="184" y="143" width="2" height="2" fill="#000" />
<rect x="97" y="143" width="1" height="1" fill="#000" />
<rect x="380" y="143" width="1" height="1" fill="#000" />
<rect x="354" y="139" width="2" height="2" fill="#000" />
<rect x="111" y="139" width="1" height="2" fill="#000" />
<rect x="96" y="140" width="1" height="1" fill="#000" />
<rect x="370" y="140" width="1" height="1" fill="#000" />
<rect x="292" y="143" width="2" height="1" fill="#000" />
<rect x="258" y="143" width="1" height="2" fill="#000" />
<rect x="379" y="140" width="1" height="1" fill="#000" />
<rect x="464" y="140" width="1" height="1" fill="#000" />
<rect x="497" y="143" width="1" height="1" fill="#000" />
<rect x="144" y="140" width="2" height="1" fill="#000" />
<rect x="102" y="140" width="2" height="1" fill="#000" />
<rect x="630" y="143" width="1" height="1" fill="#000" />
<rect x="288" y="143" width="2" height="2" fill="#000" />
<rect x="101" y="143" width="2" height="1" fill="#000" />
<rect x="658" y="143" width="1" height="1" fill="#000" />
<rect x="599" y="143" width="2" height="1" fill="#000" />
<rect x="284" y="139" width="2" height="2" fill="#000" />
<rect x="608" y="143" width="2" height="2" fill="#000" />
<rect x="299" y="140" width="1" height="1" fill="#000" />
<rect x="348" y="143" width="1" height="2" fill="#000" />
<rect x="291" y="143" width="2" height="1" fill="#000" />
<rect x="639" y="143" width="1" height="2" fill="#000" />
<rect x="174" y="143" width="1" height="1" fill="#000" />
<rect x="543" y="140" width="2" height="1" fill="#000" />
<rect x="595" y="143" width="1" height="1" fill="#000" />
<rect x="355" y="143" width="1" height="1" fill="#000" />
<rect x="124" y="143" width="1" height="2" fill="#000" />
<rect x="287" y="140" width="1" height="1" fill="#000" />
<rect x="582" y="140" width="1" height="1" fill="#000" />
<rect x="677" y="143" width="1" height="1" fill="#000" />
<rect x="148" y="143" width="1" height="1" fill="#000" />
<rect x="600" y="143" width="2" height="2" fill="#000" />
<rect x="275" y="140" width="2" height="1" fill="#000" />
<rect x="128" y="143" width="1" height="1" fill="#000" />
<rect x="202" y="140" width="1" height="1" fill="#000" />
<rect x="324" y="143" width="2" height="1" fill="#000" />
<rect x="613" y="140" width="2" height="1" fill="#000" />
<rect x="352" y="140" width="2" height="1" fill="#000" />
<rect x="351" y="139" width="2" height="2" fill="#000" />
<rect x="85" y="143" width="1" height="1" fill="#000" />
<rect x="289" y="140" width="1" height="1" fill="#000" />
<rect x="645" y="140" width="2" height="1" fill="#000" />
<rect x="121" y="140" width="1" height="1" fill="#000" />
<rect x="285" y="139" width="1" height="2" fill="#000" />
<rect x="213" y="143" width="1" height="1" fill="#000" />
<rect x="524" y="143" width="2" height="2" fill="#000" />
<rect x="601" y="143" width="2" height="1" fill="#000" />
<rect x="660" y="143" width="1" height="2" fill="#000" />
<rect x="367" y="140" width="1" height="1" fill="#000" />
<rect x="193" y="140" width="1" height="1" fill="#000" />
<rect x="260" y="143" width="1" height="1" fill="#000" />
<rect x="199" y="140" width="1" height="1" fill="#000" />
<rect x="103" y="143" width="2" height="2" fill="#000" />
<rect x="558" y="140" width="1" height="1" fill="#000" />
<rect x="635" y="139" width="1" height="2" fill="#000" />
<rect x="378" y="143" width="2" height="1" fill="#000" />
<rect x="308" y="140" width="1" height="1" fill="#000" />
<rect x="370" y="140" width="1" height="1" fill="#000" />
<rect x="254" y="139" width="1" height="2" fill="#000" />
<rect x="573" y="143" width="2" height="1" fill="#000" />
<rect x="86" y="143" width="1" height="1" fill="#000" />
<rect x="407" y="143" width="1" height="1" fill="#000" />
<rect x="205" y="139" width="1" height="2" fill="#000" />
<rect x="678" y="140" width="1" height="1" fill="#000" />
<rect x="88" y="143" width="1" height="2" fill="#000" />
<rect x="449" y="140" width="1" height="1" fill="#000" />
<rect x="231" y="139" width="1" height="2" fill="#000" />
<rect x="287" y="140" width="2" height="1" fill="#000" />
<rect x="689" y="143" width="2" height="1" fill="#000" />
<rect x="231" y="143" width="1" height="1" fill="#000" />
<rect x="391" y="143" width="1" height="1" fill="#000" />
<rect x="90" y="140" width="2" height="1" fill="#000" />
<rect x="117" y="139" width="2" height="2" fill="#000" />
<rect x="541" y="139" width="2" height="2" fill="#000" />
<rect x="184" y="140" width="1" height="1" fill="#000" />
<rect x="686" y="140" width="1" height="1" fill="#000" />
<rect x="351" y="143" width="1" height="1" fill="#000" />
<rect x="253" y="143" width="1" height="1" fill="#000" />
<rect x="399" y="139" width="1" height="2" fill="#000" />
<rect x="586" y="140" width="2" height="1" fill="#000" />
<rect x="445" y="140" width="1" height="1" fill="#000" />
<rect x="560" y="140" width="2" height="1" fill="#000" />
<rect x="126" y="143" width="2" height="1" fill="#000" />
<rect x="354" y="143" width="1" height="1" fill="#000" />
<rect x="480" y="139" width="1" height="2" fill="#000" />
<rect x="211" y="143" width="1" height="1" fill="#000" />
<rect x="453" y="140" width="1" height="1" fill="#000" />
<rect x="233" y="140" width="1" height="1" fill="#000" />
<rect x="531" y="143" width="1" height="1" fill="#000" />
<rect x="466" y="143" width="2" height="1" fill="#000" />
<rect x="122" y="143" width="1" height="1" fill="#000" />
<rect x="244" y="140" width="1" height="1" fill="#000" />
<rect x="665" y="140" width="2" height="1" fill="#000" />
<rect x="189" y="143" width="2" height="2" fill="#000" />
<rect x="85" y="139" width="2" height="2" fill="#000" />
<rect x="188" y="143" width="1" height="1" fill="#000" />
<rect x="615" y="143" width="1" height="1" fill="#000" />
<rect x="407" y="143" width="1" height="2" fill="#000" />
<rect x="318" y="140" width="1" height="1" fill="#000" />
<rect x="150" y="140" width="1" height="1" fill="#000" />
<rect x="653" y="143" width="1" height="1" fill="#000" />
<rect x="654" y="143" width="1" height="1" fill="#000" />
<rect x="119" y="139" width="1" height="2" fill="#000" />
<rect x="369" y="143" width="1" height="1" fill="#000" />
<rect x="428" y="143" width="1" height="2" fill="#000" />
<rect x="350" y="143" width="1" height="2" fill="#000" />
<rect x="542" y="143" width="2" height="1" fill="#000" />
<rect x="190" y="140" width="1" height="1" fill="#000" />
<rect x="160" y="140" width="1" height="1" fill="#000" />
<rect x="150" y="140" width="1" height="1" fill="#000" />
<rect x="565" y="143" width="1" height="1" fill="#000" />
<rect x="137" y="139" width="2" height="2" fill="#000" />
<rect x="447" y="140" width="2" height="1" fill="#000" />
<rect x="308" y="143" width="2" height="1" fill="#000" />
<rect x="447" y="143" width="1" height="1" fill="#000" />
<rect x="255" y="140" width="1" height="1" fill="#000" />
<rect x="448" y="143" width="1" height="1" fill="#000" />
<rect x="525" y="140" width="1" height="1" fill="#000" />
<rect x="357" y="139" width="1" height="2" fill="#000" />
<rect x="683" y="143" width="1" height="2" fill="#000" />
<rect x="122" y="143" width="2" height="2" fill="#000" />
<rect x="555" y="140" width="1" height="1" fill="#000" />
<rect x="315" y="140" width="1" height="1" fill="#000" />
<rect x="114" y="143" width="1" height="2" fill="#000" />
<rect x="527" y="143" width="1" height="2" fill="#000" />
<rect x="87" y="143" width="1" height="1" fill="#000" />
<rect x="348" y="143" width="1" height="1" fill="#000" />
<rect x="278" y="140" width="2" height="1" fill="#000" />
<rect x="80" y="140" width="1" height="1" fill="#000" />
<rect x="253" y="140" width="2" height="1" fill="#000" />
<rect x="643" y="143" width="2" height="2" fill="#000" />
<rect x="592" y="140" width="2" height="1" fill="#000" />
<rect x="437" y="139" width="1" height="2" fill="#000" />
<rect x="624" y="143" width="1" height="1" fill="#000" />
<rect x="583" y="140" width="1" height="1" fill="#000" />
<rect x="314" y="143" width="1" height="2" fill="#000" />
<rect x="369" y="140" width="2" height="1" fill="#000" />
<rect x="468" y="140" width="1" height="1" fill="#000" />
<rect x="471" y="140" width="2" height="1" fill="#000" />
<rect x="686" y="143" width="1" height="1" fill="#000" />
<rect x="373" y="143" width="1" height="2" fill="#000" />
<rect x="585" y="143" width="2" height="1" fill="#000" />
<rect x="218" y="140" width="1" height="1" fill="#000" />
<rect x="665" y="143" width="1" height="1" fill="#000" />
<rect x="632" y="143" width="1" height="1" fill="#000" />
<rect x="190" y="143" width="2" height="2" fill="#000" />
<rect x="322" y="143" width="2" height="1" fill="#000" />
<rect x="667" y="140" width="1" height="1" fill="#000" />
<rect x="289" y="143" width="1" height="1" fill="#000" />
<rect x="459" y="140" width="2" height="1" fill="#000" />
<rect x="604" y="140" width="2" height="1" fill="#000" />
<rect x="344" y="143" width="1" height="1" fill="#000" />
<rect x="612" y="140" width="1" height="1" fill="#000" />
<rect x="653" y="143" width="2" height="1" fill="#000" />
<rect x="323" y="140" width="1" height="1" fill="#000" />
<rect x="280" y="140" width="2" height="1" fill="#000" />
<rect x="589" y="140" width="1" height="1" fill="#000" />
<rect x="318" y="140" width="1" height="1" fill="#000" />
<rect x="241" y="143" width="1" height="1" fill="#000" />
<rect x="215" y="139" width="1" height="2" fill="#000" />
<rect x="230" y="140" width="2" height="1" fill="#000" />
<rect x="303" y="140" width="2" height="1" fill="#000" />
<rect x="321" y="143" width="2" height="2" fill="#000" />
<rect x="264" y="140" width="2" height="1" fill="#000" />
<rect x="589" y="133" width="2" height="8" fill="#000" />
<rect x="688" y="135" width="2" height="6" fill="#000" />
<rect x="581" y="143" width="2" height="7" fill="#000" />
<rect x="521" y="143" width="2" height="4" fill="#000" />
<rect x="327" y="143" width="2" height="4" fill="#000" />
<rect x="346" y="143" width="2" height="3" fill="#000" />
<rect x="196" y="143" width="2" height="5" fill="#000" />
<rect x="223" y="135" width="2" height="6" fill="#000" />
<rect x="670" y="138" width="2" height="3" fill="#000" />
<rect x="80" y="512" width="613" height="2" fill="#000" />
<rect x="719" y="203" width="9" height="106" fill="url(#cb)" />
<rect x="728" y="201" width="1" height="110" fill="#000" />
<rect x="728" y="201" width="5" height="1" fill="#000" />
<rect x="735" y="201" width="2" height="1" fill="#000"/>
<text x="737.5" y="203.6" font-family="Liberation Serif" font-weight="bold" stroke="#000" stroke-width="0.15" font-size="6.8" textLength="4.5" lengthAdjust="spacingAndGlyphs">6</text>
<rect x="728" y="228" width="5" height="1" fill="#000" />
<rect x="735" y="228" width="2" height="1" fill="#000"/>
<text x="737.5" y="230.6" font-family="Liberation Serif" font-weight="bold" stroke="#000" stroke-width="0.15" font-size="6.8" textLength="4.5" lengthAdjust="spacingAndGlyphs">7</text>
<rect x="728" y="255" width="5" height="2" fill="#000" />
<rect x="735" y="255" width="2" height="1" fill="#000"/>
<text x="737.5" y="257.6" font-family="Liberation Serif" font-weight="bold" stroke="#000" stroke-width="0.15" font-size="6.8" textLength="4.5" lengthAdjust="spacingAndGlyphs">8</text>
<rect x="728" y="282" width="5" height="2" fill="#000" />
<rect x="735" y="282" width="2" height="1" fill="#000"/>
<text x="737.5" y="284.6" font-family="Liberation Serif" font-weight="bold" stroke="#000" stroke-width="0.15" font-size="6.8" textLength="4.5" lengthAdjust="spacingAndGlyphs">9</text>
<rect x="728" y="310" width="5" height="1" fill="#000" />
<rect x="735" y="310" width="2" height="1" fill="#000"/>
<text x="737.5" y="312.6" font-family="Liberation Serif" font-weight="bold" stroke="#000" stroke-width="0.15" font-size="6.8" textLength="7" lengthAdjust="spacingAndGlyphs">10</text>
<text transform="translate(751,260.2) rotate(-90)" text-anchor="middle" font-family="Liberation Serif" font-weight="bold" stroke="#000" stroke-width="0.1" font-size="8.2" textLength="53" lengthAdjust="spacingAndGlyphs">log(PSD)(V²/Hz)</text>
<rect x="719" y="368" width="9" height="106" fill="url(#cb)" />
<rect x="728" y="366" width="1" height="110" fill="#000" />
<rect x="728" y="366" width="5" height="1" fill="#000" />
<rect x="735" y="366" width="2" height="1" fill="#000"/>
<text x="737.5" y="368.6" font-family="Liberation Serif" font-weight="bold" stroke="#000" stroke-width="0.15" font-size="6.8" textLength="4.5" lengthAdjust="spacingAndGlyphs">6</text>
<rect x="728" y="393" width="5" height="1" fill="#000" />
<rect x="735" y="393" width="2" height="1" fill="#000"/>
<text x="737.5" y="395.6" font-family="Liberation Serif" font-weight="bold" stroke="#000" stroke-width="0.15" font-size="6.8" textLength="4.5" lengthAdjust="spacingAndGlyphs">7</text>
<rect x="728" y="420" width="5" height="2" fill="#000" />
<rect x="735" y="420" width="2" height="1" fill="#000"/>
<text x="737.5" y="422.6" font-family="Liberation Serif" font-weight="bold" stroke="#000" stroke-width="0.15" font-size="6.8" textLength="4.5" lengthAdjust="spacingAndGlyphs">8</text>
<rect x="728" y="447" width="5" height="2" fill="#000" />
<rect x="735" y="447" width="2" height="1" fill="#000"/>
<text x="737.5" y="449.6" font-family="Liberation Serif" font-weight="bold" stroke="#000" stroke-width="0.15" font-size="6.8" textLength="4.5" lengthAdjust="spacingAndGlyphs">9</text>
<rect x="728" y="475" width="5" height="1" fill="#000" />
<rect x="735" y="475" width="2" height="1" fill="#000"/>
<text x="737.5" y="477.6" font-family="Liberation Serif" font-weight="bold" stroke="#000" stroke-width="0.15" font-size="6.8" textLength="7" lengthAdjust="spacingAndGlyphs">10</text>
<text transform="translate(751,425.2) rotate(-90)" text-anchor="middle" font-family="Liberation Serif" font-weight="bold" stroke="#000" stroke-width="0.1" font-size="8.2" textLength="53" lengthAdjust="spacingAndGlyphs">log(PSD)(V²/Hz)</text>
<text x="79" y="122.7" text-anchor="start" font-family="Liberation Serif" font-weight="bold" stroke="#000" stroke-width="0.2" font-size="12.5" textLength="69" lengthAdjust="spacingAndGlyphs"  xml:space="preserve">VLF Spectra</text>
<text x="251" y="123" text-anchor="start" font-family="Liberation Serif" font-weight="bold" stroke="#000" stroke-width="0.2" font-size="10" textLength="57.5" lengthAdjust="spacingAndGlyphs"  xml:space="preserve">Jan. 25, 2022</text>
<text x="343.5" y="123" text-anchor="start" font-family="Liberation Serif" font-weight="bold" stroke="#000" stroke-width="0.2" font-size="10" textLength="56.5" lengthAdjust="spacingAndGlyphs"  xml:space="preserve">station=KAG</text>
<text x="438" y="123" text-anchor="start" font-family="Liberation Serif" font-weight="bold" stroke="#000" stroke-width="0.2" font-size="10" textLength="40" lengthAdjust="spacingAndGlyphs"  xml:space="preserve">start UT =</text>
<text x="492" y="123" text-anchor="start" font-family="Liberation Serif" font-weight="bold" stroke="#000" stroke-width="0.2" font-size="10" textLength="14" lengthAdjust="spacingAndGlyphs"  xml:space="preserve">22:</text>
<text x="508" y="123" text-anchor="start" font-family="Liberation Serif" font-weight="bold" stroke="#000" stroke-width="0.2" font-size="10" textLength="4.5" lengthAdjust="spacingAndGlyphs"  xml:space="preserve">0</text>
<text x="518.5" y="123" text-anchor="start" font-family="Liberation Serif" font-weight="bold" stroke="#000" stroke-width="0.2" font-size="10" textLength="2.5" lengthAdjust="spacingAndGlyphs"  xml:space="preserve">:</text>
<text x="524" y="123" text-anchor="start" font-family="Liberation Serif" font-weight="bold" stroke="#000" stroke-width="0.2" font-size="10" textLength="4.5" lengthAdjust="spacingAndGlyphs"  xml:space="preserve">1</text>
<text x="71.5" y="129.8" text-anchor="end" font-family="Liberation Serif" font-weight="bold" stroke="#000" stroke-width="0.2" font-size="10.5"  xml:space="preserve">5</text>
<text x="71.5" y="160.8" text-anchor="end" font-family="Liberation Serif" font-weight="bold" stroke="#000" stroke-width="0.2" font-size="10.5"  xml:space="preserve">-5</text>
<text x="71.5" y="500.8" text-anchor="end" font-family="Liberation Serif" font-weight="bold" stroke="#000" stroke-width="0.2" font-size="10.5"  xml:space="preserve">5</text>
<text x="71.5" y="531.8" text-anchor="end" font-family="Liberation Serif" font-weight="bold" stroke="#000" stroke-width="0.2" font-size="10.5"  xml:space="preserve">-5</text>
<text x="71.5" y="169.8" text-anchor="end" font-family="Liberation Serif" font-weight="bold" stroke="#000" stroke-width="0.2" font-size="10.5"  xml:space="preserve">10</text>
<text x="71.5" y="335.8" text-anchor="end" font-family="Liberation Serif" font-weight="bold" stroke="#000" stroke-width="0.2" font-size="10.5"  xml:space="preserve">10</text>
<text x="71.5" y="201.8" text-anchor="end" font-family="Liberation Serif" font-weight="bold" stroke="#000" stroke-width="0.2" font-size="10.5"  xml:space="preserve">8</text>
<text x="71.5" y="366.8" text-anchor="end" font-family="Liberation Serif" font-weight="bold" stroke="#000" stroke-width="0.2" font-size="10.5"  xml:space="preserve">8</text>
<text x="71.5" y="232.8" text-anchor="end" font-family="Liberation Serif" font-weight="bold" stroke="#000" stroke-width="0.2" font-size="10.5"  xml:space="preserve">6</text>
<text x="71.5" y="398.8" text-anchor="end" font-family="Liberation Serif" font-weight="bold" stroke="#000" stroke-width="0.2" font-size="10.5"  xml:space="preserve">6</text>
<text x="71.5" y="263.8" text-anchor="end" font-family="Liberation Serif" font-weight="bold" stroke="#000" stroke-width="0.2" font-size="10.5"  xml:space="preserve">4</text>
<text x="71.5" y="429.8" text-anchor="end" font-family="Liberation Serif" font-weight="bold" stroke="#000" stroke-width="0.2" font-size="10.5"  xml:space="preserve">4</text>
<text x="71.5" y="294.8" text-anchor="end" font-family="Liberation Serif" font-weight="bold" stroke="#000" stroke-width="0.2" font-size="10.5"  xml:space="preserve">2</text>
<text x="71.5" y="460.8" text-anchor="end" font-family="Liberation Serif" font-weight="bold" stroke="#000" stroke-width="0.2" font-size="10.5"  xml:space="preserve">2</text>
<text x="71.5" y="325.8" text-anchor="end" font-family="Liberation Serif" font-weight="bold" stroke="#000" stroke-width="0.2" font-size="10.5"  xml:space="preserve">0</text>
<text x="71.5" y="491.8" text-anchor="end" font-family="Liberation Serif" font-weight="bold" stroke="#000" stroke-width="0.2" font-size="10.5"  xml:space="preserve">0</text>
<text x="79.5" y="549" text-anchor="middle" font-family="Liberation Serif" font-weight="bold" stroke="#000" stroke-width="0.2" font-size="10.5"  xml:space="preserve">0</text>
<text x="141.9" y="549" text-anchor="middle" font-family="Liberation Serif" font-weight="bold" stroke="#000" stroke-width="0.2" font-size="10.5"  xml:space="preserve">1</text>
<text x="204.3" y="549" text-anchor="middle" font-family="Liberation Serif" font-weight="bold" stroke="#000" stroke-width="0.2" font-size="10.5"  xml:space="preserve">2</text>
<text x="266.7" y="549" text-anchor="middle" font-family="Liberation Serif" font-weight="bold" stroke="#000" stroke-width="0.2" font-size="10.5"  xml:space="preserve">3</text>
<text x="329.1" y="549" text-anchor="middle" font-family="Liberation Serif" font-weight="bold" stroke="#000" stroke-width="0.2" font-size="10.5"  xml:space="preserve">4</text>
<text x="391.5" y="549" text-anchor="middle" font-family="Liberation Serif" font-weight="bold" stroke="#000" stroke-width="0.2" font-size="10.5"  xml:space="preserve">5</text>
<text x="453.9" y="549" text-anchor="middle" font-family="Liberation Serif" font-weight="bold" stroke="#000" stroke-width="0.2" font-size="10.5"  xml:space="preserve">6</text>
<text x="516.3" y="549" text-anchor="middle" font-family="Liberation Serif" font-weight="bold" stroke="#000" stroke-width="0.2" font-size="10.5"  xml:space="preserve">7</text>
<text x="578.7" y="549" text-anchor="middle" font-family="Liberation Serif" font-weight="bold" stroke="#000" stroke-width="0.2" font-size="10.5"  xml:space="preserve">8</text>
<text x="641.1" y="549" text-anchor="middle" font-family="Liberation Serif" font-weight="bold" stroke="#000" stroke-width="0.2" font-size="10.5"  xml:space="preserve">9</text>
<text x="703.5" y="549" text-anchor="middle" font-family="Liberation Serif" font-weight="bold" stroke="#000" stroke-width="0.2" font-size="10.5"  xml:space="preserve">10</text>
<text x="376" y="558" text-anchor="start" font-family="Liberation Serif" font-weight="bold" stroke="#000" stroke-width="0.2" font-size="10" textLength="48.5" lengthAdjust="spacingAndGlyphs"  xml:space="preserve">Time  (min)</text>
<text transform="translate(50.2,142.5) rotate(-90)" text-anchor="middle" font-family="Liberation Serif" font-weight="bold" stroke="#000" stroke-width="0.2" font-size="10.5" textLength="32" lengthAdjust="spacingAndGlyphs">ch.1(V)</text>
<text transform="translate(50.3,241.7) rotate(-90)" text-anchor="middle" font-family="Liberation Serif" font-weight="bold" stroke="#000" stroke-width="0.2" font-size="9.5" textLength="13.5" lengthAdjust="spacingAndGlyphs">ch.1</text>
<text transform="translate(58.6,231) rotate(-90)" text-anchor="middle" font-family="Liberation Serif" font-weight="bold" stroke="#000" stroke-width="0.2" font-size="10" textLength="70" lengthAdjust="spacingAndGlyphs">Frequency (kHz)</text>
<text transform="translate(50.3,407.4) rotate(-90)" text-anchor="middle" font-family="Liberation Serif" font-weight="bold" stroke="#000" stroke-width="0.2" font-size="9.5" textLength="13.5" lengthAdjust="spacingAndGlyphs">ch.2</text>
<text transform="translate(58.6,397) rotate(-90)" text-anchor="middle" font-family="Liberation Serif" font-weight="bold" stroke="#000" stroke-width="0.2" font-size="10" textLength="68" lengthAdjust="spacingAndGlyphs">Frequency (kHz)</text>
<text transform="translate(50.2,513.5) rotate(-90)" text-anchor="middle" font-family="Liberation Serif" font-weight="bold" stroke="#000" stroke-width="0.2" font-size="10.5" textLength="32" lengthAdjust="spacingAndGlyphs">ch.3(V)</text>
</svg></body></html>
